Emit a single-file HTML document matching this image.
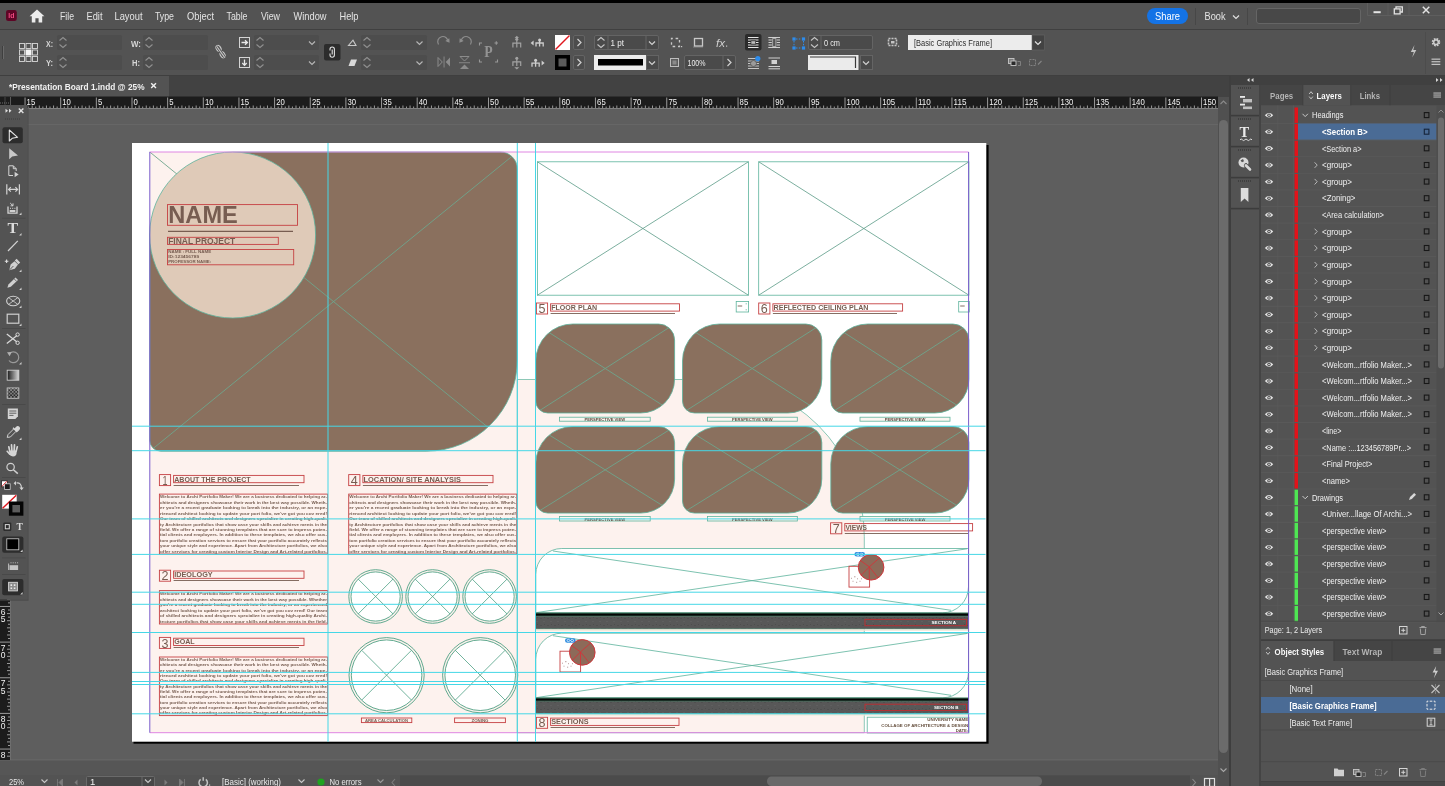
<!DOCTYPE html>
<html lang="en">
<head>
<meta charset="utf-8">
<title>Presentation Board 1.indd @ 25% - Adobe InDesign</title>
<style>
*{margin:0;padding:0}
html,body{width:1445px;height:786px;overflow:hidden;background:#535353}
svg#app{display:block;position:absolute;left:0;top:0;will-change:transform}
svg#app text{font-family:"Liberation Sans",sans-serif;white-space:pre}
svg#app .serif{font-family:"Liberation Serif",serif}
</style>
</head>
<body>
<svg id="app" width="1445" height="786" viewBox="0 0 1445 786">
<!-- sec_top -->
<rect x="0" y="0" width="1445" height="786" fill="#535353" />
<rect x="0" y="0" width="1445" height="3" fill="#000" />
<rect x="0" y="29" width="1445" height="1" fill="#404040" />
<rect x="6" y="10" width="10.8" height="11" fill="#5e0626" rx="2.2"/>
<text x="8.3" y="17.9" font-size="6.6" fill="#ee4a80" textLength="6.2" lengthAdjust="spacingAndGlyphs" font-weight="bold" >Id</text>
<path d="M37 9.5 L29.6 16.2 H31.8 V22.5 H35.4 V18.3 H38.6 V22.5 H42.2 V16.2 H44.4 Z" fill="#ececec" />
<text x="60" y="20" font-size="11" fill="#e4e4e4" textLength="14" lengthAdjust="spacingAndGlyphs" >File</text>
<text x="86.5" y="20" font-size="11" fill="#e4e4e4" textLength="16" lengthAdjust="spacingAndGlyphs" >Edit</text>
<text x="114.5" y="20" font-size="11" fill="#e4e4e4" textLength="28" lengthAdjust="spacingAndGlyphs" >Layout</text>
<text x="155" y="20" font-size="11" fill="#e4e4e4" textLength="19" lengthAdjust="spacingAndGlyphs" >Type</text>
<text x="187" y="20" font-size="11" fill="#e4e4e4" textLength="27" lengthAdjust="spacingAndGlyphs" >Object</text>
<text x="226.5" y="20" font-size="11" fill="#e4e4e4" textLength="21" lengthAdjust="spacingAndGlyphs" >Table</text>
<text x="261" y="20" font-size="11" fill="#e4e4e4" textLength="19" lengthAdjust="spacingAndGlyphs" >View</text>
<text x="293.5" y="20" font-size="11" fill="#e4e4e4" textLength="33" lengthAdjust="spacingAndGlyphs" >Window</text>
<text x="339.5" y="20" font-size="11" fill="#e4e4e4" textLength="19" lengthAdjust="spacingAndGlyphs" >Help</text>
<rect x="1147" y="8" width="41" height="16" fill="#1473e6" rx="8"/>
<text x="1155" y="20" font-size="10.5" fill="#fff" textLength="25" lengthAdjust="spacingAndGlyphs" >Share</text>
<rect x="1195" y="8" width="1" height="17" fill="#474747" />
<text x="1204.5" y="20" font-size="10.5" fill="#e4e4e4" textLength="21" lengthAdjust="spacingAndGlyphs" >Book</text>
<path d="M1233.0 15.5 L1236 18.5 L1239.0 15.5" fill="none" stroke="#e0e0e0" stroke-width="1.2" />
<rect x="1247" y="8" width="1" height="17" fill="#474747" />
<rect x="1256.5" y="8.5" width="104" height="15" fill="#484848" rx="2.5" stroke="#656565"/>
<path d="M1367.5 3 V15.5 H1445" fill="none" stroke="#5e5e5e" stroke-width="1" />
<rect x="1387.5" y="3" width="1" height="12" fill="#5c5c5c" />
<rect x="1408.5" y="3" width="1" height="12" fill="#5c5c5c" />
<rect x="1373.5" y="11.2" width="7.2" height="2" fill="#e4e4e4" />
<path d="M1396 8.8 V6.9 H1402.3 V12 H1400.4" fill="none" stroke="#e4e4e4" stroke-width="1.3" />
<rect x="1394.3" y="8.9" width="5.8" height="5" fill="none" stroke="#e4e4e4" stroke-width="1.3"/>
<path d="M1422.8 6.8 L1429.3 13.2 M1429.3 6.8 L1422.8 13.2" fill="none" stroke="#e4e4e4" stroke-width="1.5" />
<rect x="0" y="75" width="1445" height="1" fill="#3f3f3f" />
<rect x="2" y="46" width="1" height="13" fill="#3f3f3f" />
<rect x="3" y="46" width="1" height="13" fill="#6a6a6a" />
<rect x="19.5" y="43.5" width="5" height="5" fill="none" stroke="#d8d8d8" stroke-width="0.9"/>
<rect x="26.0" y="43.5" width="5" height="5" fill="none" stroke="#d8d8d8" stroke-width="0.9"/>
<rect x="32.5" y="43.5" width="5" height="5" fill="none" stroke="#d8d8d8" stroke-width="0.9"/>
<rect x="19.5" y="50.0" width="5" height="5" fill="none" stroke="#d8d8d8" stroke-width="0.9"/>
<rect x="25.5" y="49.5" width="6" height="6" fill="#f4f4f4" />
<rect x="32.5" y="50.0" width="5" height="5" fill="none" stroke="#d8d8d8" stroke-width="0.9"/>
<rect x="19.5" y="56.5" width="5" height="5" fill="none" stroke="#d8d8d8" stroke-width="0.9"/>
<rect x="26.0" y="56.5" width="5" height="5" fill="none" stroke="#d8d8d8" stroke-width="0.9"/>
<rect x="32.5" y="56.5" width="5" height="5" fill="none" stroke="#d8d8d8" stroke-width="0.9"/>
<text x="46" y="46.5" font-size="9" fill="#d6d6d6" textLength="7" lengthAdjust="spacingAndGlyphs" font-weight="bold" >X:</text>
<text x="46" y="66" font-size="9" fill="#d6d6d6" textLength="7" lengthAdjust="spacingAndGlyphs" font-weight="bold" >Y:</text>
<text x="131" y="46.5" font-size="9" fill="#d6d6d6" textLength="10" lengthAdjust="spacingAndGlyphs" font-weight="bold" >W:</text>
<text x="132" y="66" font-size="9" fill="#d6d6d6" textLength="8" lengthAdjust="spacingAndGlyphs" font-weight="bold" >H:</text>
<rect x="57" y="35" width="65" height="15" fill="#4d4d4d" rx="1.5"/>
<path d="M59.5 40.5 L63 37.5 L66.5 40.5 M59.5 44.5 L63 47.5 L66.5 44.5" fill="none" stroke="#909090" stroke-width="1.1" />
<rect x="57" y="55" width="65" height="15" fill="#4d4d4d" rx="1.5"/>
<path d="M59.5 60.5 L63 57.5 L66.5 60.5 M59.5 64.5 L63 67.5 L66.5 64.5" fill="none" stroke="#909090" stroke-width="1.1" />
<rect x="143" y="35" width="65" height="15" fill="#4d4d4d" rx="1.5"/>
<path d="M145.5 40.5 L149 37.5 L152.5 40.5 M145.5 44.5 L149 47.5 L152.5 44.5" fill="none" stroke="#909090" stroke-width="1.1" />
<rect x="143" y="55" width="65" height="15" fill="#4d4d4d" rx="1.5"/>
<path d="M145.5 60.5 L149 57.5 L152.5 60.5 M145.5 64.5 L149 67.5 L152.5 64.5" fill="none" stroke="#909090" stroke-width="1.1" />
<g transform="translate(220.6,51.6) rotate(-32)"><rect x="-2.1" y="-6.9" width="4.2" height="6.2" rx="2.1" fill="none" stroke="#c8c8c8" stroke-width="1.2"/><rect x="-2.1" y="0.7" width="4.2" height="6.2" rx="2.1" fill="none" stroke="#c8c8c8" stroke-width="1.2"/></g>
<line x1="216.6" y1="46.2" x2="224.8" y2="57.6" stroke="#535353" stroke-width="2.6" />
<line x1="216.6" y1="46.2" x2="224.8" y2="57.6" stroke="#c8c8c8" stroke-width="1.1" />
<rect x="239.5" y="37.5" width="10" height="10" fill="none" stroke="#d4d4d4"/>
<path d="M241.5 42.5 H247 M245 40.3 L247.4 42.5 L245 44.7" fill="none" stroke="#e8e8e8" stroke-width="1.3" />
<rect x="239.5" y="57.5" width="10" height="10" fill="none" stroke="#d4d4d4"/>
<path d="M244.5 59.5 V65 M242.3 63 L244.5 65.4 L246.7 63" fill="none" stroke="#e8e8e8" stroke-width="1.3" />
<rect x="254" y="35" width="65" height="15" fill="#4d4d4d" rx="1.5"/>
<path d="M256.5 40.5 L260 37.5 L263.5 40.5 M256.5 44.5 L260 47.5 L263.5 44.5" fill="none" stroke="#909090" stroke-width="1.1" />
<path d="M309.0 41.5 L312 44.5 L315.0 41.5" fill="none" stroke="#b4b4b4" stroke-width="1.2" />
<rect x="361" y="35" width="66" height="15" fill="#4d4d4d" rx="1.5"/>
<path d="M363.5 40.5 L367 37.5 L370.5 40.5 M363.5 44.5 L367 47.5 L370.5 44.5" fill="none" stroke="#909090" stroke-width="1.1" />
<path d="M416.5 41.5 L419.5 44.5 L422.5 41.5" fill="none" stroke="#b4b4b4" stroke-width="1.2" />
<rect x="254" y="55" width="65" height="15" fill="#4d4d4d" rx="1.5"/>
<path d="M256.5 60.5 L260 57.5 L263.5 60.5 M256.5 64.5 L260 67.5 L263.5 64.5" fill="none" stroke="#909090" stroke-width="1.1" />
<path d="M309.0 61.5 L312 64.5 L315.0 61.5" fill="none" stroke="#b4b4b4" stroke-width="1.2" />
<rect x="361" y="55" width="66" height="15" fill="#4d4d4d" rx="1.5"/>
<path d="M363.5 60.5 L367 57.5 L370.5 60.5 M363.5 64.5 L367 67.5 L370.5 64.5" fill="none" stroke="#909090" stroke-width="1.1" />
<path d="M416.5 61.5 L419.5 64.5 L422.5 61.5" fill="none" stroke="#b4b4b4" stroke-width="1.2" />
<rect x="324" y="44" width="16.5" height="16.5" fill="#2c2c2c" rx="2"/>
<path d="M330 50.5 v-1.3 a2.2 2.2 0 0 1 4.4 0 v5.8 a2.2 2.2 0 0 1 -4.4 0 v-1.6 M332.2 49.5 v5" fill="none" stroke="#e0e0e0" stroke-width="1.1" />
<path d="M348.5 45.5 L356 45.5 L353 40.2 Z" fill="none" stroke="#c8c8c8" stroke-width="1.1" />
<path d="M348.5 66 L351 59.5 H357 L354.5 66 Z" fill="#d8d8d8" />
<path d="M438.5 44.5 a5.2 5.2 0 1 1 9.6 -2.6" fill="none" stroke="#8c8c8c" stroke-width="1.2" />
<path d="M445.3 41 L449.6 42.8 L449.3 38.3 Z" fill="#8c8c8c" />
<path d="M470.5 44.5 a5.2 5.2 0 1 0 -9.6 -2.6" fill="none" stroke="#8c8c8c" stroke-width="1.2" />
<path d="M463.7 41 L459.4 42.8 L459.7 38.3 Z" fill="#8c8c8c" />
<path d="M438 57.5 V66.5 L442.3 62 Z" fill="none" stroke="#8c8c8c" stroke-width="1" />
<path d="M450 57.5 V66.5 L445.7 62 Z" fill="#8c8c8c" />
<rect x="443.6" y="56.5" width="0.9" height="11" fill="#8c8c8c" />
<path d="M460 56.5 H469 L464.5 61 Z" fill="none" stroke="#8c8c8c" stroke-width="1" />
<path d="M460 69 H469 L464.5 64.5 Z" fill="#8c8c8c" />
<rect x="459" y="62.3" width="11" height="0.9" fill="#8c8c8c" />
<text x="484.2" y="57.3" font-size="16.8" fill="#939393" textLength="8.4" lengthAdjust="spacingAndGlyphs" font-weight="bold" class="serif">P</text>
<path d="M479.5 45.5 V43 H482 M494.5 43 H498 M496.3 41.3 V44.7 M479.5 59.5 V62 H482 M497.5 59.5 V62 H495" fill="none" stroke="#989898" stroke-width="1.1" />
<path d="M516.8 38.6 V47.6 M512.9 47.6 V43.1 H520.6999999999999 V47.6" fill="none" stroke="#a2a2a2" stroke-width="1.2" /><circle cx="516.8" cy="39.2" r="1.5" fill="#a2a2a2"/>
<path d="M514.6 38 L516.8 35.8 L519 38 Z" fill="#a2a2a2" />
<path d="M516.8 57.6 V66.0 M512.9 66.0 V61.800000000000004 H520.6999999999999 V66.0" fill="none" stroke="#a2a2a2" stroke-width="1.2" /><circle cx="516.8" cy="58.2" r="1.5" fill="#a2a2a2"/>
<path d="M514.3 67.2 L516.8 69.6 L519.3 67.2 Z" fill="#a2a2a2" />
<path d="M539.6 39.4 V46.6 M536.0 46.6 V43.0 H543.1999999999999 V46.6" fill="none" stroke="#cdcdcd" stroke-width="1.3" /><circle cx="539.6" cy="40.0" r="1.5" fill="#cdcdcd"/>
<path d="M533.6 40.4 L530.6 43 L533.6 45.6 Z" fill="#cdcdcd" />
<path d="M535.6 59.6 V66.8 M532.0 66.8 V63.2 H539.1999999999999 V66.8" fill="none" stroke="#cdcdcd" stroke-width="1.3" /><circle cx="535.6" cy="60.2" r="1.5" fill="#cdcdcd"/>
<path d="M541.6 60.4 L544.6 63 L541.6 65.6 Z" fill="#cdcdcd" />
<rect x="555" y="35" width="15" height="15" fill="#fff" />
<line x1="555.5" y1="49.5" x2="569.5" y2="35.5" stroke="#e0171e" stroke-width="1.4" />
<rect x="573.5" y="35.5" width="11" height="14" fill="#4c4c4c" stroke="#646464" rx="1.5"/>
<path d="M577.5 39.0 L581 42.5 L577.5 46.0" fill="none" stroke="#d0d0d0" stroke-width="1.2" />
<rect x="555" y="55" width="15" height="15" fill="#000" />
<rect x="558.5" y="58.5" width="8" height="8" fill="#5a5a5a" />
<rect x="573.5" y="55.5" width="11" height="14" fill="#4c4c4c" stroke="#646464" rx="1.5"/>
<path d="M577.5 59.0 L581 62.5 L577.5 66.0" fill="none" stroke="#d0d0d0" stroke-width="1.2" />
<rect x="594.5" y="35.5" width="64" height="14" fill="#4a4a4a" stroke="#646464" rx="1.5"/>
<path d="M597.5 40.5 L601 37.5 L604.5 40.5 M597.5 44.5 L601 47.5 L604.5 44.5" fill="none" stroke="#c4c4c4" stroke-width="1.1" />
<rect x="607.5" y="36" width="1" height="13" fill="#646464" />
<rect x="645.5" y="36" width="1" height="13" fill="#646464" />
<text x="610.5" y="46" font-size="9.5" fill="#ececec" textLength="13.5" lengthAdjust="spacingAndGlyphs" >1 pt</text>
<path d="M649.0 41.5 L652 44.5 L655.0 41.5" fill="none" stroke="#d0d0d0" stroke-width="1.2" />
<rect x="594" y="55" width="52" height="15" fill="#ededed" />
<rect x="598" y="59" width="45" height="6.5" fill="#000" />
<rect x="646.5" y="55.5" width="12" height="14" fill="#4a4a4a" stroke="#646464"/>
<path d="M649.0 61.5 L652 64.5 L655.0 61.5" fill="none" stroke="#d0d0d0" stroke-width="1.2" />
<rect x="671.5" y="38.5" width="8" height="8" fill="none" stroke="#c8c8c8" stroke-width="1.3" stroke-dasharray="2.6 2.8" stroke-dashoffset="1.3"/>
<rect x="681" y="46" width="1.2" height="1.2" fill="#c8c8c8" />
<rect x="693" y="46.3" width="10" height="1.6" fill="#6e6e6e" />
<rect x="694.5" y="38.5" width="8" height="7.5" fill="none" stroke="#c8c8c8" stroke-width="1.3"/>
<text x="716" y="46.5" font-size="10.5" fill="#cfcfcf" textLength="9" lengthAdjust="spacingAndGlyphs" font-style="italic">fx</text>
<rect x="726" y="45.5" width="1.2" height="1.2" fill="#c8c8c8" />
<rect x="670.5" y="58.5" width="8" height="8" fill="#5e5e5e" stroke="#bdbdbd"/>
<rect x="672.5" y="60.5" width="4" height="4" fill="#8a8a8a" />
<rect x="684.5" y="55.5" width="51" height="14" fill="#4a4a4a" stroke="#646464" rx="1.5"/>
<rect x="722.5" y="56" width="1" height="13" fill="#646464" />
<text x="687.5" y="65.6" font-size="9.5" fill="#ececec" textLength="18" lengthAdjust="spacingAndGlyphs" >100%</text>
<path d="M727.5 59.0 L731 62.5 L727.5 66.0" fill="none" stroke="#d0d0d0" stroke-width="1.2" />
<rect x="745" y="34" width="16.5" height="16.5" fill="#2b2b2b" rx="2"/>
<rect x="748" y="37.0" width="10.5" height="1" fill="#e4e4e4" />
<rect x="748" y="39.5" width="10.5" height="1" fill="#e4e4e4" />
<rect x="748" y="42.0" width="10.5" height="1" fill="#e4e4e4" />
<rect x="748" y="44.5" width="10.5" height="1" fill="#e4e4e4" />
<rect x="748" y="47.0" width="10.5" height="1" fill="#e4e4e4" />
<rect x="750.5" y="40.5" width="5.5" height="4" fill="#2b2b2b" />
<rect x="751.3" y="41.2" width="4" height="2.6" fill="#bdbdbd" />
<rect x="768.5" y="37" width="3.3" height="1" fill="#d0d0d0" />
<rect x="776.7" y="37" width="3.3" height="1" fill="#d0d0d0" />
<rect x="768.5" y="39.5" width="3.3" height="1" fill="#d0d0d0" />
<rect x="776.7" y="39.5" width="3.3" height="1" fill="#d0d0d0" />
<rect x="768.5" y="42" width="3.3" height="1" fill="#d0d0d0" />
<rect x="776.7" y="42" width="3.3" height="1" fill="#d0d0d0" />
<rect x="768.5" y="44.5" width="3.3" height="1" fill="#d0d0d0" />
<rect x="776.7" y="44.5" width="3.3" height="1" fill="#d0d0d0" />
<rect x="768.5" y="47" width="3.3" height="1" fill="#d0d0d0" />
<rect x="776.7" y="47" width="3.3" height="1" fill="#d0d0d0" />
<rect x="768.5" y="37" width="11.5" height="1" fill="#d0d0d0" />
<rect x="768.5" y="47" width="11.5" height="1" fill="#d0d0d0" />
<rect x="772.7" y="38.6" width="3.2" height="7.8" fill="none" stroke="#bdbdbd" stroke-width="0.8"/>
<rect x="748" y="58" width="11" height="1" fill="#c4c4c4" />
<rect x="748" y="60.5" width="11" height="1" fill="#c4c4c4" />
<rect x="748" y="63" width="11" height="1" fill="#c4c4c4" />
<rect x="748" y="65.5" width="11" height="1" fill="#c4c4c4" />
<rect x="748" y="68" width="11" height="1" fill="#c4c4c4" />
<circle cx="753.5" cy="63.5" r="3" fill="#9a9a9a" stroke="#535353" stroke-width="0.8"/>
<circle cx="757.8" cy="58.6" r="2.6" fill="#2d8ceb"/>
<rect x="768.5" y="57.5" width="11.5" height="1" fill="#d0d0d0" />
<rect x="768.5" y="66" width="11.5" height="1" fill="#d0d0d0" />
<rect x="768.5" y="68.3" width="11.5" height="1" fill="#d0d0d0" />
<rect x="771.5" y="60" width="5.5" height="4" fill="#d0d0d0" />
<rect x="792.4" y="37.4" width="3.2" height="3.2" fill="#2d8ceb" />
<rect x="801.9" y="37.4" width="3.2" height="3.2" fill="#2d8ceb" />
<rect x="792.4" y="46.4" width="3.2" height="3.2" fill="#2d8ceb" />
<rect x="801.9" y="46.4" width="3.2" height="3.2" fill="#2d8ceb" />
<path d="M796 39 H801.5 M796 48 H801.5 M794 41 V46 M803.5 41 V46" fill="none" stroke="#2d8ceb" stroke-width="1" stroke-dasharray="1.5 1.3"/>
<rect x="808.5" y="35.5" width="64" height="14" fill="#4a4a4a" stroke="#646464" rx="1.5"/>
<path d="M811.0 40.5 L814.5 37.5 L818.0 40.5 M811.0 44.5 L814.5 47.5 L818.0 44.5" fill="none" stroke="#c4c4c4" stroke-width="1.1" />
<rect x="820.5" y="36" width="1" height="13" fill="#646464" />
<text x="824" y="45.8" font-size="9.5" fill="#ececec" textLength="16" lengthAdjust="spacingAndGlyphs" >0 cm</text>
<rect x="808" y="55" width="50.5" height="15" fill="#ebebeb" />
<path d="M810 57 H855.5 V68" fill="none" stroke="#3a3a3a" stroke-width="1.2" />
<rect x="860.5" y="55.5" width="12" height="14" fill="#4a4a4a" stroke="#646464"/>
<path d="M863.0 61.5 L866 64.5 L869.0 61.5" fill="none" stroke="#d0d0d0" stroke-width="1.2" />
<rect x="888.5" y="38.5" width="8" height="7" fill="none" stroke="#c4c4c4" stroke-width="1.6" stroke-dasharray="2 1"/>
<rect x="891" y="41" width="3.5" height="2.5" fill="#c4c4c4" />
<rect x="898" y="45.6" width="1.2" height="1.2" fill="#c8c8c8" />
<rect x="908" y="35" width="124" height="15" fill="#ececec" />
<text x="914" y="46" font-size="9.5" fill="#2c2c2c" textLength="78" lengthAdjust="spacingAndGlyphs" >[Basic Graphics Frame]</text>
<rect x="1032" y="35" width="12.5" height="15" fill="#434343" stroke="#646464" stroke-width="0.6"/>
<path d="M1035.0 41.5 L1038 44.5 L1041.0 41.5" fill="none" stroke="#e0e0e0" stroke-width="1.2" />
<rect x="1008.5" y="58.5" width="5.5" height="5" fill="#7a7a7a" stroke="#c8c8c8" stroke-width="0.9"/>
<rect x="1011" y="61" width="5" height="4.5" fill="#2a2a2a" stroke="#c8c8c8" stroke-width="0.9"/>
<path d="M1017.5 61.5 h3 v4 h-2.5" fill="none" stroke="#868686" stroke-width="0.9" />
<rect x="1029.5" y="59.5" width="6" height="6" fill="none" stroke="#868686" stroke-width="0.9" stroke-dasharray="2 1"/>
<line x1="1038" y1="64.5" x2="1041.5" y2="61" stroke="#868686" stroke-width="1.1" />
<path d="M1414.5 45 L1410.8 52 H1413.8 L1412.2 57.5 L1416.3 50 H1413.3 Z" fill="#c4c4c4" />
<rect x="1425" y="32" width="1" height="42" fill="#4c4c4c" />
<circle cx="1436" cy="42.2" r="3.1" fill="none" stroke="#cfcfcf" stroke-width="2.3" stroke-dasharray="1.55 0.9"/><circle cx="1436" cy="42.2" r="2.3" fill="none" stroke="#cfcfcf" stroke-width="1.4"/>
<rect x="1431.5" y="58.6" width="8.8" height="1.1" fill="#cfcfcf" />
<rect x="1431.5" y="61.2" width="8.8" height="1.1" fill="#cfcfcf" />
<rect x="1431.5" y="63.8" width="8.8" height="1.1" fill="#cfcfcf" />
<rect x="0" y="76" width="1445" height="21" fill="#424242" />
<rect x="0" y="76" width="169" height="21" fill="#535353" />
<text x="9" y="90" font-size="9.5" fill="#f2f2f2" textLength="135.5" lengthAdjust="spacingAndGlyphs" font-weight="bold" >*Presentation Board 1.indd @ 25%</text>
<path d="M151.2 83.2 L156 88 M156 83.2 L151.2 88" fill="none" stroke="#f0f0f0" stroke-width="1.4" />
<!-- sec_canvas -->
<rect x="0" y="108" width="1218" height="668" fill="#5e5e5e" />
<rect x="10" y="124" width="1208" height="1" fill="#666666" />
<rect x="0" y="759.5" width="1218" height="1" fill="#6a6a6a" />
<rect x="0" y="96.5" width="1218" height="12.5" fill="#1c1c1c" />
<rect x="10" y="108" width="1208" height="1" fill="#808080" />
<path d="M0 103 H10 M5 97.5 V108" fill="none" stroke="#6e6e6e" stroke-width="1" stroke-dasharray="1 1"/>
<rect x="10" y="97" width="1" height="12" fill="#5a5a5a" />
<path d="M14.36 106.5V108M17.92 105.5V108M21.48 106.5V108M25.05 97.5V108M28.61 106.5V108M32.18 105.5V108M35.75 106.5V108M39.31 105.5V108M42.88 106.5V108M46.44 105.5V108M50.00 106.5V108M53.57 105.5V108M57.14 106.5V108M60.70 97.5V108M64.27 106.5V108M67.83 105.5V108M71.40 106.5V108M74.96 105.5V108M78.53 106.5V108M82.09 105.5V108M85.66 106.5V108M89.22 105.5V108M92.78 106.5V108M96.35 97.5V108M99.91 106.5V108M103.48 105.5V108M107.05 106.5V108M110.61 105.5V108M114.17 106.5V108M117.74 105.5V108M121.31 106.5V108M124.87 105.5V108M128.44 106.5V108M132.00 97.5V108M135.56 106.5V108M139.13 105.5V108M142.69 106.5V108M146.26 105.5V108M149.82 106.5V108M153.39 105.5V108M156.95 106.5V108M160.52 105.5V108M164.09 106.5V108M167.65 97.5V108M171.22 106.5V108M174.78 105.5V108M178.34 106.5V108M181.91 105.5V108M185.47 106.5V108M189.04 105.5V108M192.60 106.5V108M196.17 105.5V108M199.74 106.5V108M203.30 97.5V108M206.87 106.5V108M210.43 105.5V108M214.00 106.5V108M217.56 105.5V108M221.12 106.5V108M224.69 105.5V108M228.25 106.5V108M231.82 105.5V108M235.38 106.5V108M238.95 97.5V108M242.51 106.5V108M246.08 105.5V108M249.64 106.5V108M253.21 105.5V108M256.77 106.5V108M260.34 105.5V108M263.90 106.5V108M267.47 105.5V108M271.03 106.5V108M274.60 97.5V108M278.16 106.5V108M281.73 105.5V108M285.29 106.5V108M288.86 105.5V108M292.43 106.5V108M295.99 105.5V108M299.56 106.5V108M303.12 105.5V108M306.69 106.5V108M310.25 97.5V108M313.81 106.5V108M317.38 105.5V108M320.94 106.5V108M324.51 105.5V108M328.07 106.5V108M331.64 105.5V108M335.20 106.5V108M338.77 105.5V108M342.34 106.5V108M345.90 97.5V108M349.47 106.5V108M353.03 105.5V108M356.60 106.5V108M360.16 105.5V108M363.73 106.5V108M367.29 105.5V108M370.86 106.5V108M374.42 105.5V108M377.99 106.5V108M381.55 97.5V108M385.12 106.5V108M388.68 105.5V108M392.25 106.5V108M395.81 105.5V108M399.38 106.5V108M402.94 105.5V108M406.50 106.5V108M410.07 105.5V108M413.63 106.5V108M417.20 97.5V108M420.76 106.5V108M424.33 105.5V108M427.89 106.5V108M431.46 105.5V108M435.02 106.5V108M438.59 105.5V108M442.15 106.5V108M445.72 105.5V108M449.28 106.5V108M452.85 97.5V108M456.42 106.5V108M459.98 105.5V108M463.55 106.5V108M467.11 105.5V108M470.68 106.5V108M474.24 105.5V108M477.81 106.5V108M481.37 105.5V108M484.94 106.5V108M488.50 97.5V108M492.06 106.5V108M495.63 105.5V108M499.19 106.5V108M502.76 105.5V108M506.32 106.5V108M509.89 105.5V108M513.45 106.5V108M517.02 105.5V108M520.59 106.5V108M524.15 97.5V108M527.71 106.5V108M531.28 105.5V108M534.85 106.5V108M538.41 105.5V108M541.97 106.5V108M545.54 105.5V108M549.11 106.5V108M552.67 105.5V108M556.24 106.5V108M559.80 97.5V108M563.37 106.5V108M566.93 105.5V108M570.50 106.5V108M574.06 105.5V108M577.62 106.5V108M581.19 105.5V108M584.75 106.5V108M588.32 105.5V108M591.88 106.5V108M595.45 97.5V108M599.01 106.5V108M602.58 105.5V108M606.14 106.5V108M609.71 105.5V108M613.27 106.5V108M616.84 105.5V108M620.40 106.5V108M623.97 105.5V108M627.53 106.5V108M631.10 97.5V108M634.66 106.5V108M638.23 105.5V108M641.80 106.5V108M645.36 105.5V108M648.92 106.5V108M652.49 105.5V108M656.05 106.5V108M659.62 105.5V108M663.18 106.5V108M666.75 97.5V108M670.31 106.5V108M673.88 105.5V108M677.44 106.5V108M681.01 105.5V108M684.58 106.5V108M688.14 105.5V108M691.71 106.5V108M695.27 105.5V108M698.84 106.5V108M702.40 97.5V108M705.97 106.5V108M709.53 105.5V108M713.10 106.5V108M716.66 105.5V108M720.23 106.5V108M723.79 105.5V108M727.36 106.5V108M730.92 105.5V108M734.49 106.5V108M738.05 97.5V108M741.62 106.5V108M745.18 105.5V108M748.75 106.5V108M752.31 105.5V108M755.88 106.5V108M759.44 105.5V108M763.00 106.5V108M766.57 105.5V108M770.13 106.5V108M773.70 97.5V108M777.26 106.5V108M780.83 105.5V108M784.39 106.5V108M787.96 105.5V108M791.52 106.5V108M795.09 105.5V108M798.65 106.5V108M802.22 105.5V108M805.78 106.5V108M809.35 97.5V108M812.91 106.5V108M816.48 105.5V108M820.04 106.5V108M823.61 105.5V108M827.17 106.5V108M830.74 105.5V108M834.30 106.5V108M837.87 105.5V108M841.43 106.5V108M845.00 97.5V108M848.56 106.5V108M852.13 105.5V108M855.69 106.5V108M859.26 105.5V108M862.83 106.5V108M866.39 105.5V108M869.96 106.5V108M873.52 105.5V108M877.09 106.5V108M880.65 97.5V108M884.22 106.5V108M887.78 105.5V108M891.35 106.5V108M894.91 105.5V108M898.48 106.5V108M902.04 105.5V108M905.61 106.5V108M909.17 105.5V108M912.74 106.5V108M916.30 97.5V108M919.87 106.5V108M923.43 105.5V108M927.00 106.5V108M930.56 105.5V108M934.12 106.5V108M937.69 105.5V108M941.25 106.5V108M944.82 105.5V108M948.38 106.5V108M951.95 97.5V108M955.51 106.5V108M959.08 105.5V108M962.64 106.5V108M966.21 105.5V108M969.77 106.5V108M973.34 105.5V108M976.90 106.5V108M980.47 105.5V108M984.03 106.5V108M987.60 97.5V108M991.16 106.5V108M994.73 105.5V108M998.29 106.5V108M1001.86 105.5V108M1005.42 106.5V108M1008.99 105.5V108M1012.55 106.5V108M1016.12 105.5V108M1019.68 106.5V108M1023.25 97.5V108M1026.82 106.5V108M1030.38 105.5V108M1033.94 106.5V108M1037.51 105.5V108M1041.07 106.5V108M1044.64 105.5V108M1048.20 106.5V108M1051.77 105.5V108M1055.34 106.5V108M1058.90 97.5V108M1062.47 106.5V108M1066.03 105.5V108M1069.60 106.5V108M1073.16 105.5V108M1076.72 106.5V108M1080.29 105.5V108M1083.86 106.5V108M1087.42 105.5V108M1090.99 106.5V108M1094.55 97.5V108M1098.12 106.5V108M1101.68 105.5V108M1105.24 106.5V108M1108.81 105.5V108M1112.38 106.5V108M1115.94 105.5V108M1119.51 106.5V108M1123.07 105.5V108M1126.63 106.5V108M1130.20 97.5V108M1133.76 106.5V108M1137.33 105.5V108M1140.89 106.5V108M1144.46 105.5V108M1148.03 106.5V108M1151.59 105.5V108M1155.15 106.5V108M1158.72 105.5V108M1162.29 106.5V108M1165.85 97.5V108M1169.41 106.5V108M1172.98 105.5V108M1176.55 106.5V108M1180.11 105.5V108M1183.67 106.5V108M1187.24 105.5V108M1190.81 106.5V108M1194.37 105.5V108M1197.93 106.5V108M1201.50 97.5V108M1205.07 106.5V108M1208.63 105.5V108M1212.19 106.5V108M1215.76 105.5V108" fill="none" stroke="#a8a8a8" stroke-width="0.9" />
<text x="26.6" y="105.2" font-size="8.5" fill="#f4f4f4" textLength="8.6" lengthAdjust="spacingAndGlyphs" >15</text>
<text x="62.3" y="105.2" font-size="8.5" fill="#f4f4f4" textLength="8.6" lengthAdjust="spacingAndGlyphs" >10</text>
<text x="97.9" y="105.2" font-size="8.5" fill="#f4f4f4" textLength="4.3" lengthAdjust="spacingAndGlyphs" >5</text>
<text x="133.6" y="105.2" font-size="8.5" fill="#f4f4f4" textLength="4.3" lengthAdjust="spacingAndGlyphs" >0</text>
<text x="169.2" y="105.2" font-size="8.5" fill="#f4f4f4" textLength="4.3" lengthAdjust="spacingAndGlyphs" >5</text>
<text x="204.9" y="105.2" font-size="8.5" fill="#f4f4f4" textLength="8.6" lengthAdjust="spacingAndGlyphs" >10</text>
<text x="240.5" y="105.2" font-size="8.5" fill="#f4f4f4" textLength="8.6" lengthAdjust="spacingAndGlyphs" >15</text>
<text x="276.2" y="105.2" font-size="8.5" fill="#f4f4f4" textLength="8.6" lengthAdjust="spacingAndGlyphs" >20</text>
<text x="311.9" y="105.2" font-size="8.5" fill="#f4f4f4" textLength="8.6" lengthAdjust="spacingAndGlyphs" >25</text>
<text x="347.5" y="105.2" font-size="8.5" fill="#f4f4f4" textLength="8.6" lengthAdjust="spacingAndGlyphs" >30</text>
<text x="383.1" y="105.2" font-size="8.5" fill="#f4f4f4" textLength="8.6" lengthAdjust="spacingAndGlyphs" >35</text>
<text x="418.8" y="105.2" font-size="8.5" fill="#f4f4f4" textLength="8.6" lengthAdjust="spacingAndGlyphs" >40</text>
<text x="454.5" y="105.2" font-size="8.5" fill="#f4f4f4" textLength="8.6" lengthAdjust="spacingAndGlyphs" >45</text>
<text x="490.1" y="105.2" font-size="8.5" fill="#f4f4f4" textLength="8.6" lengthAdjust="spacingAndGlyphs" >50</text>
<text x="525.8" y="105.2" font-size="8.5" fill="#f4f4f4" textLength="8.6" lengthAdjust="spacingAndGlyphs" >55</text>
<text x="561.4" y="105.2" font-size="8.5" fill="#f4f4f4" textLength="8.6" lengthAdjust="spacingAndGlyphs" >60</text>
<text x="597.1" y="105.2" font-size="8.5" fill="#f4f4f4" textLength="8.6" lengthAdjust="spacingAndGlyphs" >65</text>
<text x="632.7" y="105.2" font-size="8.5" fill="#f4f4f4" textLength="8.6" lengthAdjust="spacingAndGlyphs" >70</text>
<text x="668.4" y="105.2" font-size="8.5" fill="#f4f4f4" textLength="8.6" lengthAdjust="spacingAndGlyphs" >75</text>
<text x="704.0" y="105.2" font-size="8.5" fill="#f4f4f4" textLength="8.6" lengthAdjust="spacingAndGlyphs" >80</text>
<text x="739.6" y="105.2" font-size="8.5" fill="#f4f4f4" textLength="8.6" lengthAdjust="spacingAndGlyphs" >85</text>
<text x="775.3" y="105.2" font-size="8.5" fill="#f4f4f4" textLength="8.6" lengthAdjust="spacingAndGlyphs" >90</text>
<text x="811.0" y="105.2" font-size="8.5" fill="#f4f4f4" textLength="8.6" lengthAdjust="spacingAndGlyphs" >95</text>
<text x="846.6" y="105.2" font-size="8.5" fill="#f4f4f4" textLength="12.9" lengthAdjust="spacingAndGlyphs" >100</text>
<text x="882.2" y="105.2" font-size="8.5" fill="#f4f4f4" textLength="12.9" lengthAdjust="spacingAndGlyphs" >105</text>
<text x="917.9" y="105.2" font-size="8.5" fill="#f4f4f4" textLength="12.9" lengthAdjust="spacingAndGlyphs" >110</text>
<text x="953.5" y="105.2" font-size="8.5" fill="#f4f4f4" textLength="12.9" lengthAdjust="spacingAndGlyphs" >115</text>
<text x="989.2" y="105.2" font-size="8.5" fill="#f4f4f4" textLength="12.9" lengthAdjust="spacingAndGlyphs" >120</text>
<text x="1024.8" y="105.2" font-size="8.5" fill="#f4f4f4" textLength="12.9" lengthAdjust="spacingAndGlyphs" >125</text>
<text x="1060.5" y="105.2" font-size="8.5" fill="#f4f4f4" textLength="12.9" lengthAdjust="spacingAndGlyphs" >130</text>
<text x="1096.1" y="105.2" font-size="8.5" fill="#f4f4f4" textLength="12.9" lengthAdjust="spacingAndGlyphs" >135</text>
<text x="1131.8" y="105.2" font-size="8.5" fill="#f4f4f4" textLength="12.9" lengthAdjust="spacingAndGlyphs" >140</text>
<text x="1167.4" y="105.2" font-size="8.5" fill="#f4f4f4" textLength="12.9" lengthAdjust="spacingAndGlyphs" >145</text>
<text x="1203.1" y="105.2" font-size="8.5" fill="#f4f4f4" textLength="12.9" lengthAdjust="spacingAndGlyphs" >150</text>
<rect x="0" y="109" width="10" height="651" fill="#1c1c1c" />
<rect x="10" y="109" width="1" height="651" fill="#6e6e6e" />
<path d="M8 110.91H10M7 114.48H10M8 118.05H10M7 121.61H10M8 125.17H10M7 128.74H10M8 132.31H10M7 135.87H10M8 139.44H10M0 143.00H10M8 146.56H10M7 150.13H10M8 153.69H10M7 157.26H10M8 160.82H10M7 164.39H10M8 167.95H10M7 171.52H10M8 175.09H10M0 178.65H10M8 182.22H10M7 185.78H10M8 189.34H10M7 192.91H10M8 196.47H10M7 200.04H10M8 203.60H10M7 207.17H10M8 210.74H10M0 214.30H10M8 217.87H10M7 221.43H10M8 225.00H10M7 228.56H10M8 232.12H10M7 235.69H10M8 239.25H10M7 242.82H10M8 246.38H10M0 249.95H10M8 253.51H10M7 257.08H10M8 260.64H10M7 264.21H10M8 267.77H10M7 271.34H10M8 274.90H10M7 278.47H10M8 282.03H10M0 285.60H10M8 289.16H10M7 292.73H10M8 296.29H10M7 299.86H10M8 303.43H10M7 306.99H10M8 310.56H10M7 314.12H10M8 317.69H10M0 321.25H10M8 324.81H10M7 328.38H10M8 331.94H10M7 335.51H10M8 339.07H10M7 342.64H10M8 346.20H10M7 349.77H10M8 353.34H10M0 356.90H10M8 360.47H10M7 364.03H10M8 367.60H10M7 371.16H10M8 374.73H10M7 378.29H10M8 381.86H10M7 385.42H10M8 388.99H10M0 392.55H10M8 396.12H10M7 399.68H10M8 403.25H10M7 406.81H10M8 410.38H10M7 413.94H10M8 417.50H10M7 421.07H10M8 424.63H10M0 428.20H10M8 431.76H10M7 435.33H10M8 438.89H10M7 442.46H10M8 446.02H10M7 449.59H10M8 453.15H10M7 456.72H10M8 460.28H10M0 463.85H10M8 467.42H10M7 470.98H10M8 474.55H10M7 478.11H10M8 481.68H10M7 485.24H10M8 488.81H10M7 492.37H10M8 495.94H10M0 499.50H10M8 503.06H10M7 506.63H10M8 510.19H10M7 513.76H10M8 517.33H10M7 520.89H10M8 524.45H10M7 528.02H10M8 531.59H10M0 535.15H10M8 538.71H10M7 542.28H10M8 545.85H10M7 549.41H10M8 552.97H10M7 556.54H10M8 560.11H10M7 563.67H10M8 567.24H10M0 570.80H10M8 574.37H10M7 577.93H10M8 581.50H10M7 585.06H10M8 588.62H10M7 592.19H10M8 595.75H10M7 599.32H10M8 602.88H10M0 606.45H10M8 610.01H10M7 613.58H10M8 617.14H10M7 620.71H10M8 624.27H10M7 627.84H10M8 631.40H10M7 634.97H10M8 638.53H10M0 642.10H10M8 645.66H10M7 649.23H10M8 652.80H10M7 656.36H10M8 659.92H10M7 663.49H10M8 667.05H10M7 670.62H10M8 674.18H10M0 677.75H10M8 681.31H10M7 684.88H10M8 688.44H10M7 692.01H10M8 695.58H10M7 699.14H10M8 702.71H10M7 706.27H10M8 709.84H10M0 713.40H10M8 716.97H10M7 720.53H10M8 724.10H10M7 727.66H10M8 731.23H10M7 734.79H10M8 738.36H10M7 741.92H10M8 745.49H10M0 749.05H10M8 752.62H10M7 756.18H10" fill="none" stroke="#a8a8a8" stroke-width="0.9" />
<text x="0.8" y="151.5" font-size="8.5" fill="#f4f4f4" >0</text>
<text x="0.8" y="187.2" font-size="8.5" fill="#f4f4f4" >5</text>
<text x="0.8" y="222.8" font-size="8.5" fill="#f4f4f4" >1</text>
<text x="0.8" y="230.1" font-size="8.5" fill="#f4f4f4" >0</text>
<text x="0.8" y="258.4" font-size="8.5" fill="#f4f4f4" >1</text>
<text x="0.8" y="265.8" font-size="8.5" fill="#f4f4f4" >5</text>
<text x="0.8" y="294.1" font-size="8.5" fill="#f4f4f4" >2</text>
<text x="0.8" y="301.4" font-size="8.5" fill="#f4f4f4" >0</text>
<text x="0.8" y="329.8" font-size="8.5" fill="#f4f4f4" >2</text>
<text x="0.8" y="337.1" font-size="8.5" fill="#f4f4f4" >5</text>
<text x="0.8" y="365.4" font-size="8.5" fill="#f4f4f4" >3</text>
<text x="0.8" y="372.7" font-size="8.5" fill="#f4f4f4" >0</text>
<text x="0.8" y="401.0" font-size="8.5" fill="#f4f4f4" >3</text>
<text x="0.8" y="408.3" font-size="8.5" fill="#f4f4f4" >5</text>
<text x="0.8" y="436.7" font-size="8.5" fill="#f4f4f4" >4</text>
<text x="0.8" y="444.0" font-size="8.5" fill="#f4f4f4" >0</text>
<text x="0.8" y="472.4" font-size="8.5" fill="#f4f4f4" >4</text>
<text x="0.8" y="479.7" font-size="8.5" fill="#f4f4f4" >5</text>
<text x="0.8" y="508.0" font-size="8.5" fill="#f4f4f4" >5</text>
<text x="0.8" y="515.3" font-size="8.5" fill="#f4f4f4" >0</text>
<text x="0.8" y="543.6" font-size="8.5" fill="#f4f4f4" >5</text>
<text x="0.8" y="550.9" font-size="8.5" fill="#f4f4f4" >5</text>
<text x="0.8" y="579.3" font-size="8.5" fill="#f4f4f4" >6</text>
<text x="0.8" y="586.6" font-size="8.5" fill="#f4f4f4" >0</text>
<text x="0.8" y="615.0" font-size="8.5" fill="#f4f4f4" >6</text>
<text x="0.8" y="622.2" font-size="8.5" fill="#f4f4f4" >5</text>
<text x="0.8" y="650.6" font-size="8.5" fill="#f4f4f4" >7</text>
<text x="0.8" y="657.9" font-size="8.5" fill="#f4f4f4" >0</text>
<text x="0.8" y="686.2" font-size="8.5" fill="#f4f4f4" >7</text>
<text x="0.8" y="693.5" font-size="8.5" fill="#f4f4f4" >5</text>
<text x="0.8" y="721.9" font-size="8.5" fill="#f4f4f4" >8</text>
<text x="0.8" y="729.2" font-size="8.5" fill="#f4f4f4" >0</text>
<text x="0.8" y="757.5" font-size="8.5" fill="#f4f4f4" >8</text>
<rect x="1218" y="97" width="11" height="689" fill="#505050" />
<rect x="1219" y="120" width="9" height="633" fill="#6b6b6b" rx="4.5"/>
<path d="M1220.5 104 L1223.5 101 L1226.5 104" fill="none" stroke="#8a8a8a" stroke-width="1.1" />
<path d="M1220.5 768.5 L1223.5 771.5 L1226.5 768.5" fill="none" stroke="#a8a8a8" stroke-width="1.1" />
<!-- sec_page -->
<defs><pattern id="spk" width="7" height="7" patternUnits="userSpaceOnUse"><rect width="7" height="7" fill="#585858"/><rect x="1" y="2" width="2" height="1" fill="#505050"/><rect x="4" y="5" width="2" height="1" fill="#5f5f5f"/><rect x="5" y="1" width="1" height="1" fill="#4e4e4e"/></pattern></defs>
<rect x="133.5" y="145" width="855.1" height="598.7" fill="#000" />
<rect x="132" y="143" width="854.3" height="598.7" fill="#fff" />
<rect x="149.8" y="152" width="368" height="580.7" fill="#fdf2ee" />
<path d="M517.3 379.5 H707.3 A157 157 0 0 1 864.3 536.5 V732.7 H517.3 Z" fill="#fdf2ee" stroke="#5cb39c" stroke-width="0.7" />
<path d="M240.8 152 H500.29999999999995 A17 17 0 0 1 517.3 169 V360.2 A91 91 0 0 1 426.29999999999995 451.2 H160.8 A11 11 0 0 1 149.8 440.2 V243 A91 91 0 0 1 240.8 152 Z" fill="#8a705e" stroke="#5cb39c" stroke-width="0.8" />
<clipPath id="cbig"><path d="M240.8 152 H500.29999999999995 A17 17 0 0 1 517.3 169 V360.2 A91 91 0 0 1 426.29999999999995 451.2 H160.8 A11 11 0 0 1 149.8 440.2 V243 A91 91 0 0 1 240.8 152 Z"/><rect x="149" y="151" width="60" height="60"/></clipPath>
<path d="M149.8 152L517.3 451.2M149.8 451.2L517.3 152" fill="none" stroke="#6ea58c" stroke-width="0.9" clip-path="url(#cbig)"/>
<circle cx="232.6" cy="235" r="83" fill="#dfcab8" stroke="#5cb39c" stroke-width="0.8"/>
<rect x="167.5" y="204.6" width="130.0" height="20.7" fill="none" stroke="#c54042" stroke-width="0.9"/>
<text x="168.3" y="222.8" font-size="23.2" fill="#775d51" textLength="69.5" lengthAdjust="spacingAndGlyphs" font-weight="bold" >NAME</text>
<line x1="168" y1="231.4" x2="293" y2="231.4" stroke="#775d51" stroke-width="1.4" />
<rect x="167.5" y="237.3" width="110.8" height="7.1" fill="none" stroke="#c54042" stroke-width="0.9"/>
<text x="168.2" y="244.2" font-size="9" fill="#775d51" textLength="67" lengthAdjust="spacingAndGlyphs" font-weight="bold" >FINAL PROJECT</text>
<rect x="167.5" y="249.5" width="126.2" height="15.3" fill="none" stroke="#c54042" stroke-width="0.9"/>
<text x="168.2" y="252.7" font-size="3.9" fill="#775d51" textLength="43" lengthAdjust="spacingAndGlyphs" font-weight="bold" >NAME : FULL NAME</text>
<text x="168.2" y="257.8" font-size="3.9" fill="#775d51" textLength="31" lengthAdjust="spacingAndGlyphs" font-weight="bold" >ID:123456789</text>
<text x="168.2" y="262.9" font-size="3.9" fill="#775d51" textLength="43" lengthAdjust="spacingAndGlyphs" font-weight="bold" >PROFESSOR NAME:</text>
<rect x="159.4" y="474.6" width="11.2" height="11.0" fill="none" stroke="#c54042" stroke-width="0.9"/><text x="162.5" y="484.70000000000005" font-size="13.5" fill="#775d51" textLength="5" lengthAdjust="spacingAndGlyphs" >1</text><rect x="173.6" y="475.40000000000003" width="130.4" height="7.3" fill="none" stroke="#c54042" stroke-width="0.9"/><text x="174.2" y="481.5" font-size="7.9" fill="#775d51" textLength="76.5" lengthAdjust="spacingAndGlyphs" font-weight="bold" >ABOUT THE PROJECT</text><line x1="173.6" y1="485.5" x2="299" y2="485.5" stroke="#775d51" stroke-width="0.9" />
<rect x="159.4" y="494.1" width="168.2" height="59.9" fill="none" stroke="#c54042" stroke-width="0.9"/><text x="160.0" y="498.35" font-size="4.3" fill="#775d51" textLength="167.0" lengthAdjust="spacingAndGlyphs" font-weight="bold" >Welcome to Archi Portfolio Maker! We are a business dedicated to helping ar-</text><text x="160.0" y="503.79" font-size="4.3" fill="#775d51" textLength="167.0" lengthAdjust="spacingAndGlyphs" font-weight="bold" >chitects and designers showcase their work in the best way possible. Wheth-</text><text x="160.0" y="509.24" font-size="4.3" fill="#775d51" textLength="167.0" lengthAdjust="spacingAndGlyphs" font-weight="bold" >er you're a recent graduate looking to break into the industry, or an expe-</text><text x="160.0" y="514.68" font-size="4.3" fill="#775d51" textLength="167.0" lengthAdjust="spacingAndGlyphs" font-weight="bold" >rienced architect looking to update your port folio, we've got you cov ered!</text><text x="160.0" y="520.13" font-size="4.3" fill="#775d51" textLength="167.0" lengthAdjust="spacingAndGlyphs" font-weight="bold" >Our team of skilled architects and designers specialize in creating high-quali-</text><text x="160.0" y="525.57" font-size="4.3" fill="#775d51" textLength="167.0" lengthAdjust="spacingAndGlyphs" font-weight="bold" >ty Architecture portfolios that show case your skills and achieve ments in the</text><text x="160.0" y="531.02" font-size="4.3" fill="#775d51" textLength="167.0" lengthAdjust="spacingAndGlyphs" font-weight="bold" >field. We offer a range of stunning templates that are sure to impress poten-</text><text x="160.0" y="536.47" font-size="4.3" fill="#775d51" textLength="167.0" lengthAdjust="spacingAndGlyphs" font-weight="bold" >tial clients and employers. In addition to these templates, we also offer cus-</text><text x="160.0" y="541.91" font-size="4.3" fill="#775d51" textLength="167.0" lengthAdjust="spacingAndGlyphs" font-weight="bold" >tom portfolio creation services to ensure that your portfolio accurately reflects</text><text x="160.0" y="547.36" font-size="4.3" fill="#775d51" textLength="167.0" lengthAdjust="spacingAndGlyphs" font-weight="bold" >your unique style and experience. Apart from Architecture portfolios, we also</text><text x="160.0" y="552.8" font-size="4.3" fill="#775d51" textLength="167.0" lengthAdjust="spacingAndGlyphs" font-weight="bold" >offer services for creating custom Interior Design and Art-related portfolios.</text>
<rect x="159.4" y="570.2" width="11.2" height="11.0" fill="none" stroke="#c54042" stroke-width="0.9"/><text x="161.5" y="580.3000000000001" font-size="13.5" fill="#775d51" textLength="7" lengthAdjust="spacingAndGlyphs" >2</text><rect x="173.6" y="571.0" width="130.4" height="7.3" fill="none" stroke="#c54042" stroke-width="0.9"/><text x="174.2" y="577.1" font-size="7.9" fill="#775d51" textLength="38.5" lengthAdjust="spacingAndGlyphs" font-weight="bold" >IDEOLOGY</text><line x1="173.6" y1="580.5" x2="299" y2="580.5" stroke="#775d51" stroke-width="0.9" />
<rect x="159.4" y="590.6" width="168.2" height="33.4" fill="none" stroke="#c54042" stroke-width="0.9"/><text x="160.0" y="594.94" font-size="4.3" fill="#775d51" textLength="167.0" lengthAdjust="spacingAndGlyphs" font-weight="bold" >Welcome to Archi Portfolio Maker! We are a business dedicated to helping ar-</text><text x="160.0" y="600.51" font-size="4.3" fill="#775d51" textLength="167.0" lengthAdjust="spacingAndGlyphs" font-weight="bold" >chitects and designers showcase their work in the best way possible. Whether</text><text x="160.0" y="606.08" font-size="4.3" fill="#775d51" textLength="167.0" lengthAdjust="spacingAndGlyphs" font-weight="bold" >you're a recent graduate looking to break into the industry, or an experienced</text><text x="160.0" y="611.64" font-size="4.3" fill="#775d51" textLength="167.0" lengthAdjust="spacingAndGlyphs" font-weight="bold" >architect looking to update your port folio, we've got you cov ered! Our team</text><text x="160.0" y="617.21" font-size="4.3" fill="#775d51" textLength="167.0" lengthAdjust="spacingAndGlyphs" font-weight="bold" >of skilled architects and designers specialize in creating high-quality Archi-</text><text x="160.0" y="622.78" font-size="4.3" fill="#775d51" textLength="167.0" lengthAdjust="spacingAndGlyphs" font-weight="bold" >tecture portfolios that show case your skills and achieve ments in the field.</text>
<rect x="159.4" y="637.4" width="11.2" height="11.0" fill="none" stroke="#c54042" stroke-width="0.9"/><text x="161.5" y="647.5" font-size="13.5" fill="#775d51" textLength="7" lengthAdjust="spacingAndGlyphs" >3</text><rect x="173.6" y="638.1999999999999" width="130.4" height="7.3" fill="none" stroke="#c54042" stroke-width="0.9"/><text x="174.2" y="644.3" font-size="7.9" fill="#775d51" textLength="20.5" lengthAdjust="spacingAndGlyphs" font-weight="bold" >GOAL</text><line x1="173.6" y1="647.5" x2="299" y2="647.5" stroke="#775d51" stroke-width="0.9" />
<rect x="159.4" y="657" width="168.2" height="58.6" fill="none" stroke="#c54042" stroke-width="0.9"/><text x="160.0" y="661.16" font-size="4.3" fill="#775d51" textLength="167.0" lengthAdjust="spacingAndGlyphs" font-weight="bold" >Welcome to Archi Portfolio Maker! We are a business dedicated to helping ar-</text><text x="160.0" y="666.48" font-size="4.3" fill="#775d51" textLength="167.0" lengthAdjust="spacingAndGlyphs" font-weight="bold" >chitects and designers showcase their work in the best way possible. Wheth-</text><text x="160.0" y="671.81" font-size="4.3" fill="#775d51" textLength="167.0" lengthAdjust="spacingAndGlyphs" font-weight="bold" >er you're a recent graduate looking to break into the industry, or an expe-</text><text x="160.0" y="677.14" font-size="4.3" fill="#775d51" textLength="167.0" lengthAdjust="spacingAndGlyphs" font-weight="bold" >rienced architect looking to update your port folio, we've got you cov ered!</text><text x="160.0" y="682.46" font-size="4.3" fill="#775d51" textLength="167.0" lengthAdjust="spacingAndGlyphs" font-weight="bold" >Our team of skilled architects and designers specialize in creating high-quali-</text><text x="160.0" y="687.79" font-size="4.3" fill="#775d51" textLength="167.0" lengthAdjust="spacingAndGlyphs" font-weight="bold" >ty Architecture portfolios that show case your skills and achieve ments in the</text><text x="160.0" y="693.12" font-size="4.3" fill="#775d51" textLength="167.0" lengthAdjust="spacingAndGlyphs" font-weight="bold" >field. We offer a range of stunning templates that are sure to impress poten-</text><text x="160.0" y="698.45" font-size="4.3" fill="#775d51" textLength="167.0" lengthAdjust="spacingAndGlyphs" font-weight="bold" >tial clients and employers. In addition to these templates, we also offer cus-</text><text x="160.0" y="703.77" font-size="4.3" fill="#775d51" textLength="167.0" lengthAdjust="spacingAndGlyphs" font-weight="bold" >tom portfolio creation services to ensure that your portfolio accurately reflects</text><text x="160.0" y="709.1" font-size="4.3" fill="#775d51" textLength="167.0" lengthAdjust="spacingAndGlyphs" font-weight="bold" >your unique style and experience. Apart from Architecture portfolios, we also</text><text x="160.0" y="714.43" font-size="4.3" fill="#775d51" textLength="167.0" lengthAdjust="spacingAndGlyphs" font-weight="bold" >offer services for creating custom Interior Design and Art-related portfolios.</text>
<rect x="348.7" y="474.6" width="11.2" height="11.0" fill="none" stroke="#c54042" stroke-width="0.9"/><text x="350.8" y="484.70000000000005" font-size="13.5" fill="#775d51" textLength="7" lengthAdjust="spacingAndGlyphs" >4</text><rect x="362.9" y="475.40000000000003" width="130.1" height="7.3" fill="none" stroke="#c54042" stroke-width="0.9"/><text x="363.5" y="481.5" font-size="7.9" fill="#775d51" textLength="97.5" lengthAdjust="spacingAndGlyphs" font-weight="bold" >LOCATION/ SITE ANALYSIS</text><line x1="362.9" y1="485.5" x2="488" y2="485.5" stroke="#775d51" stroke-width="0.9" />
<rect x="348.7" y="494.1" width="168.1" height="59.9" fill="none" stroke="#c54042" stroke-width="0.9"/><text x="349.3" y="498.35" font-size="4.3" fill="#775d51" textLength="166.9" lengthAdjust="spacingAndGlyphs" font-weight="bold" >Welcome to Archi Portfolio Maker! We are a business dedicated to helping ar-</text><text x="349.3" y="503.79" font-size="4.3" fill="#775d51" textLength="166.9" lengthAdjust="spacingAndGlyphs" font-weight="bold" >chitects and designers showcase their work in the best way possible. Wheth-</text><text x="349.3" y="509.24" font-size="4.3" fill="#775d51" textLength="166.9" lengthAdjust="spacingAndGlyphs" font-weight="bold" >er you're a recent graduate looking to break into the industry, or an expe-</text><text x="349.3" y="514.68" font-size="4.3" fill="#775d51" textLength="166.9" lengthAdjust="spacingAndGlyphs" font-weight="bold" >rienced architect looking to update your port folio, we've got you cov ered!</text><text x="349.3" y="520.13" font-size="4.3" fill="#775d51" textLength="166.9" lengthAdjust="spacingAndGlyphs" font-weight="bold" >Our team of skilled architects and designers specialize in creating high-quali-</text><text x="349.3" y="525.57" font-size="4.3" fill="#775d51" textLength="166.9" lengthAdjust="spacingAndGlyphs" font-weight="bold" >ty Architecture portfolios that show case your skills and achieve ments in the</text><text x="349.3" y="531.02" font-size="4.3" fill="#775d51" textLength="166.9" lengthAdjust="spacingAndGlyphs" font-weight="bold" >field. We offer a range of stunning templates that are sure to impress poten-</text><text x="349.3" y="536.47" font-size="4.3" fill="#775d51" textLength="166.9" lengthAdjust="spacingAndGlyphs" font-weight="bold" >tial clients and employers. In addition to these templates, we also offer cus-</text><text x="349.3" y="541.91" font-size="4.3" fill="#775d51" textLength="166.9" lengthAdjust="spacingAndGlyphs" font-weight="bold" >tom portfolio creation services to ensure that your portfolio accurately reflects</text><text x="349.3" y="547.36" font-size="4.3" fill="#775d51" textLength="166.9" lengthAdjust="spacingAndGlyphs" font-weight="bold" >your unique style and experience. Apart from Architecture portfolios, we also</text><text x="349.3" y="552.8" font-size="4.3" fill="#775d51" textLength="166.9" lengthAdjust="spacingAndGlyphs" font-weight="bold" >offer services for creating custom Interior Design and Art-related portfolios.</text>
<circle cx="375.6" cy="596.5" r="26.8" fill="none" stroke="#4fa185" stroke-width="0.9"/><circle cx="375.6" cy="596.5" r="24.6" fill="#fff" stroke="#4fa185" stroke-width="0.9"/>
<path d="M358.2 579.1L393.0 613.9M358.2 613.9L393.0 579.1" fill="none" stroke="#4fa185" stroke-width="0.8" />
<circle cx="432.6" cy="596.5" r="26.8" fill="none" stroke="#4fa185" stroke-width="0.9"/><circle cx="432.6" cy="596.5" r="24.6" fill="#fff" stroke="#4fa185" stroke-width="0.9"/>
<path d="M415.2 579.1L450.0 613.9M415.2 613.9L450.0 579.1" fill="none" stroke="#4fa185" stroke-width="0.8" />
<circle cx="489.6" cy="596.5" r="26.8" fill="none" stroke="#4fa185" stroke-width="0.9"/><circle cx="489.6" cy="596.5" r="24.6" fill="#fff" stroke="#4fa185" stroke-width="0.9"/>
<path d="M472.2 579.1L507.0 613.9M472.2 613.9L507.0 579.1" fill="none" stroke="#4fa185" stroke-width="0.8" />
<circle cx="386.6" cy="675.2" r="37.6" fill="none" stroke="#4fa185" stroke-width="0.9"/><circle cx="386.6" cy="675.2" r="35.3" fill="#fff" stroke="#4fa185" stroke-width="0.9"/>
<path d="M361.6 650.2L411.6 700.2M361.6 700.2L411.6 650.2" fill="none" stroke="#4fa185" stroke-width="0.8" />
<circle cx="480.2" cy="675.2" r="37.6" fill="none" stroke="#4fa185" stroke-width="0.9"/><circle cx="480.2" cy="675.2" r="35.3" fill="#fff" stroke="#4fa185" stroke-width="0.9"/>
<path d="M455.2 650.2L505.2 700.2M455.2 700.2L505.2 650.2" fill="none" stroke="#4fa185" stroke-width="0.8" />
<rect x="361.4" y="718" width="50.4" height="4.6" fill="none" stroke="#c54042" stroke-width="0.9"/>
<text x="365" y="721.8" font-size="3.9" fill="#775d51" textLength="43" lengthAdjust="spacingAndGlyphs" font-weight="bold" >AREA CALCULATION</text>
<rect x="454.6" y="718" width="50.8" height="4.6" fill="none" stroke="#c54042" stroke-width="0.9"/>
<text x="471.5" y="721.8" font-size="3.9" fill="#775d51" textLength="17" lengthAdjust="spacingAndGlyphs" font-weight="bold" >ZONING</text>
<rect x="537.4" y="161.8" width="211.0" height="133.4" fill="#fff" stroke="#5cb39c" stroke-width="0.8"/><path d="M537.4 161.8L748.4 295.2M537.4 295.2L748.4 161.8" fill="none" stroke="#5a9a86" stroke-width="0.8" />
<rect x="758.7" y="161.8" width="210.2" height="133.4" fill="#fff" stroke="#5cb39c" stroke-width="0.8"/><path d="M758.7 161.8L968.9 295.2M758.7 295.2L968.9 161.8" fill="none" stroke="#5a9a86" stroke-width="0.8" />
<rect x="536.4" y="303" width="11.2" height="11" fill="none" stroke="#c54042" stroke-width="0.9"/><text x="538.5" y="313.1" font-size="13.5" fill="#775d51" textLength="7" lengthAdjust="spacingAndGlyphs" >5</text><rect x="550.6" y="303.8" width="128.9" height="7.3" fill="none" stroke="#c54042" stroke-width="0.9"/><text x="551.2" y="309.9" font-size="7.9" fill="#775d51" textLength="46" lengthAdjust="spacingAndGlyphs" font-weight="bold" >FLOOR PLAN</text><line x1="550.6" y1="313.5" x2="675" y2="313.5" stroke="#775d51" stroke-width="0.9" />
<rect x="758.7" y="303" width="11.2" height="11" fill="none" stroke="#c54042" stroke-width="0.9"/><text x="760.8000000000001" y="313.1" font-size="13.5" fill="#775d51" textLength="7" lengthAdjust="spacingAndGlyphs" >6</text><rect x="772.9000000000001" y="303.8" width="129.7" height="7.3" fill="none" stroke="#c54042" stroke-width="0.9"/><text x="773.5000000000001" y="309.9" font-size="7.9" fill="#775d51" textLength="95" lengthAdjust="spacingAndGlyphs" font-weight="bold" >REFLECTED CEILING PLAN</text><line x1="772.9000000000001" y1="313.5" x2="897" y2="313.5" stroke="#775d51" stroke-width="0.9" />
<rect x="736.2" y="301.5" width="12.4" height="10.5" fill="none" stroke="#5cb39c" stroke-width="0.8"/>
<line x1="737.7" y1="306" x2="742.2" y2="306" stroke="#775d51" stroke-width="0.9" />
<rect x="745.7" y="303.3" width="1" height="1" fill="#5cb39c" />
<rect x="745.7" y="309.3" width="1" height="1" fill="#5cb39c" />
<rect x="958.7" y="301.5" width="10.6" height="10.5" fill="none" stroke="#5cb39c" stroke-width="0.8"/>
<line x1="960.2" y1="306" x2="964.7" y2="306" stroke="#775d51" stroke-width="0.9" />
<rect x="968.2" y="303.3" width="1" height="1" fill="#5cb39c" />
<rect x="968.2" y="309.3" width="1" height="1" fill="#5cb39c" />
<path d="M572.8 324 H658.6 A16 16 0 0 1 674.6 340 V379 A34 34 0 0 1 640.6 413 H547.8 A12 12 0 0 1 535.8 401 V361 A37 37 0 0 1 572.8 324 Z" fill="#8a705e" stroke="#5cb39c" stroke-width="0.8" />
<clipPath id="c535_324"><path d="M572.8 324 H658.6 A16 16 0 0 1 674.6 340 V379 A34 34 0 0 1 640.6 413 H547.8 A12 12 0 0 1 535.8 401 V361 A37 37 0 0 1 572.8 324 Z"/></clipPath>
<path d="M535.8 324L674.6 413M535.8 413L674.6 324" fill="none" stroke="#6ea58c" stroke-width="0.9" clip-path="url(#c535_324)"/>
<rect x="559.4" y="417.2" width="90.8" height="4.0" fill="#fbf6f1" stroke="#5cb39c" stroke-width="0.8"/>
<text x="584.6" y="420.7" font-size="4" fill="#5f4a3f" textLength="40.5" lengthAdjust="spacingAndGlyphs" font-weight="bold" >PERSPECTIVE VIEW</text>
<path d="M719.5 324 H805.8 A16 16 0 0 1 821.8 340 V379 A34 34 0 0 1 787.8 413 H694.5 A12 12 0 0 1 682.5 401 V361 A37 37 0 0 1 719.5 324 Z" fill="#8a705e" stroke="#5cb39c" stroke-width="0.8" />
<clipPath id="c682_324"><path d="M719.5 324 H805.8 A16 16 0 0 1 821.8 340 V379 A34 34 0 0 1 787.8 413 H694.5 A12 12 0 0 1 682.5 401 V361 A37 37 0 0 1 719.5 324 Z"/></clipPath>
<path d="M682.5 324L821.8 413M682.5 413L821.8 324" fill="none" stroke="#6ea58c" stroke-width="0.9" clip-path="url(#c682_324)"/>
<rect x="707.4" y="417.2" width="89.9" height="4.0" fill="#fbf6f1" stroke="#5cb39c" stroke-width="0.8"/>
<text x="732.1" y="420.7" font-size="4" fill="#5f4a3f" textLength="40.5" lengthAdjust="spacingAndGlyphs" font-weight="bold" >PERSPECTIVE VIEW</text>
<path d="M867.8 324 H952.9 A16 16 0 0 1 968.9 340 V379 A34 34 0 0 1 934.9 413 H842.8 A12 12 0 0 1 830.8 401 V361 A37 37 0 0 1 867.8 324 Z" fill="#8a705e" stroke="#5cb39c" stroke-width="0.8" />
<clipPath id="c830_324"><path d="M867.8 324 H952.9 A16 16 0 0 1 968.9 340 V379 A34 34 0 0 1 934.9 413 H842.8 A12 12 0 0 1 830.8 401 V361 A37 37 0 0 1 867.8 324 Z"/></clipPath>
<path d="M830.8 324L968.9 413M830.8 413L968.9 324" fill="none" stroke="#6ea58c" stroke-width="0.9" clip-path="url(#c830_324)"/>
<rect x="860" y="417.2" width="90" height="4.0" fill="#fbf6f1" stroke="#5cb39c" stroke-width="0.8"/>
<text x="884.8" y="420.7" font-size="4" fill="#5f4a3f" textLength="40.5" lengthAdjust="spacingAndGlyphs" font-weight="bold" >PERSPECTIVE VIEW</text>
<path d="M572.8 426.6 H658.6 A16 16 0 0 1 674.6 442.6 V479.1 A34 34 0 0 1 640.6 513.1 H547.8 A12 12 0 0 1 535.8 501.1 V463.6 A37 37 0 0 1 572.8 426.6 Z" fill="#8a705e" stroke="#5cb39c" stroke-width="0.8" />
<clipPath id="c535_426"><path d="M572.8 426.6 H658.6 A16 16 0 0 1 674.6 442.6 V479.1 A34 34 0 0 1 640.6 513.1 H547.8 A12 12 0 0 1 535.8 501.1 V463.6 A37 37 0 0 1 572.8 426.6 Z"/></clipPath>
<path d="M535.8 426.6L674.6 513.1M535.8 513.1L674.6 426.6" fill="none" stroke="#6ea58c" stroke-width="0.9" clip-path="url(#c535_426)"/>
<rect x="559.4" y="516.4" width="90.8" height="4.6" fill="#fbf6f1" stroke="#5cb39c" stroke-width="0.8"/>
<text x="584.6" y="520.5" font-size="4" fill="#5f4a3f" textLength="40.5" lengthAdjust="spacingAndGlyphs" font-weight="bold" >PERSPECTIVE VIEW</text>
<path d="M719.5 426.6 H805.8 A16 16 0 0 1 821.8 442.6 V479.1 A34 34 0 0 1 787.8 513.1 H694.5 A12 12 0 0 1 682.5 501.1 V463.6 A37 37 0 0 1 719.5 426.6 Z" fill="#8a705e" stroke="#5cb39c" stroke-width="0.8" />
<clipPath id="c682_426"><path d="M719.5 426.6 H805.8 A16 16 0 0 1 821.8 442.6 V479.1 A34 34 0 0 1 787.8 513.1 H694.5 A12 12 0 0 1 682.5 501.1 V463.6 A37 37 0 0 1 719.5 426.6 Z"/></clipPath>
<path d="M682.5 426.6L821.8 513.1M682.5 513.1L821.8 426.6" fill="none" stroke="#6ea58c" stroke-width="0.9" clip-path="url(#c682_426)"/>
<rect x="707.4" y="516.4" width="89.9" height="4.6" fill="#fbf6f1" stroke="#5cb39c" stroke-width="0.8"/>
<text x="732.1" y="520.5" font-size="4" fill="#5f4a3f" textLength="40.5" lengthAdjust="spacingAndGlyphs" font-weight="bold" >PERSPECTIVE VIEW</text>
<path d="M867.8 426.6 H952.9 A16 16 0 0 1 968.9 442.6 V479.1 A34 34 0 0 1 934.9 513.1 H842.8 A12 12 0 0 1 830.8 501.1 V463.6 A37 37 0 0 1 867.8 426.6 Z" fill="#8a705e" stroke="#5cb39c" stroke-width="0.8" />
<clipPath id="c830_426"><path d="M867.8 426.6 H952.9 A16 16 0 0 1 968.9 442.6 V479.1 A34 34 0 0 1 934.9 513.1 H842.8 A12 12 0 0 1 830.8 501.1 V463.6 A37 37 0 0 1 867.8 426.6 Z"/></clipPath>
<path d="M830.8 426.6L968.9 513.1M830.8 513.1L968.9 426.6" fill="none" stroke="#6ea58c" stroke-width="0.9" clip-path="url(#c830_426)"/>
<rect x="860" y="516.4" width="90" height="4.6" fill="#fbf6f1" stroke="#5cb39c" stroke-width="0.8"/>
<text x="884.8" y="520.5" font-size="4" fill="#5f4a3f" textLength="40.5" lengthAdjust="spacingAndGlyphs" font-weight="bold" >PERSPECTIVE VIEW</text>
<rect x="830.6" y="522.8" width="11.2" height="11.0" fill="none" stroke="#c54042" stroke-width="0.9"/><text x="832.7" y="532.9" font-size="13.5" fill="#775d51" textLength="7" lengthAdjust="spacingAndGlyphs" >7</text><rect x="844.8000000000001" y="523.5999999999999" width="127.8" height="7.3" fill="none" stroke="#c54042" stroke-width="0.9"/><text x="845.4000000000001" y="529.6999999999999" font-size="7.9" fill="#775d51" textLength="21.5" lengthAdjust="spacingAndGlyphs" font-weight="bold" >VIEWS</text><line x1="844.8000000000001" y1="533.5" x2="968" y2="533.5" stroke="#775d51" stroke-width="0.9" />
<path d="M561.8 548.5 H968.5 A0 0 0 0 1 968.5 548.5 V586.8 A26 26 0 0 1 942.5 612.8 H535.8 A0 0 0 0 1 535.8 612.8 V574.5 A26 26 0 0 1 561.8 548.5 Z" fill="#fff" stroke="#5cb39c" stroke-width="0.8" />
<path d="M553 551.0L951 610.3M537 612.5L967 548.8" fill="none" stroke="#5cb39c" stroke-width="0.8" />
<rect x="535.8" y="612.8" width="432.9" height="3.3" fill="#050505" />
<rect x="535.8" y="616.1" width="432.9" height="12.9" fill="url(#spk)" />
<line x1="535.8" y1="613.0" x2="968.5" y2="613.0" stroke="#4e9b78" stroke-width="0.8" />
<line x1="535.8" y1="616.1" x2="968.5" y2="616.1" stroke="#3f7a60" stroke-width="0.7" />
<line x1="535.8" y1="629" x2="968.5" y2="629" stroke="#5a9a80" stroke-width="0.8" />
<rect x="535.8" y="629.4" width="432.9" height="1.4" fill="#eee8d8" />
<rect x="865" y="619.3499999999999" width="101.5" height="6.4" fill="none" stroke="#c22c30" stroke-width="0.9"/>
<text x="931.6" y="624.0" font-size="4.1" fill="#fff" textLength="24.5" lengthAdjust="spacingAndGlyphs" font-weight="bold" >SECTION A</text>
<path d="M561.8 633.2 H968.5 A0 0 0 0 1 968.5 633.2 V671.8 A26 26 0 0 1 942.5 697.8 H535.8 A0 0 0 0 1 535.8 697.8 V659.2 A26 26 0 0 1 561.8 633.2 Z" fill="#fff" stroke="#5cb39c" stroke-width="0.8" />
<path d="M553 635.7L951 695.3M537 697.5L967 633.5" fill="none" stroke="#5cb39c" stroke-width="0.8" />
<rect x="535.8" y="697.8" width="432.9" height="3.2" fill="#050505" />
<rect x="535.8" y="701" width="432.9" height="12.8" fill="url(#spk)" />
<line x1="535.8" y1="698.0" x2="968.5" y2="698.0" stroke="#4e9b78" stroke-width="0.8" />
<line x1="535.8" y1="701" x2="968.5" y2="701" stroke="#3f7a60" stroke-width="0.7" />
<line x1="535.8" y1="713.8" x2="968.5" y2="713.8" stroke="#5a9a80" stroke-width="0.8" />
<rect x="535.8" y="714.1999999999999" width="432.9" height="1.4" fill="#eee8d8" />
<rect x="865" y="704.1999999999999" width="101.5" height="6.4" fill="none" stroke="#c22c30" stroke-width="0.9"/>
<text x="934" y="708.9" font-size="4.1" fill="#fff" textLength="24.5" lengthAdjust="spacingAndGlyphs" font-weight="bold" >SECTION B</text>
<rect x="849" y="566.3" width="20.6" height="20.8" fill="#fff" stroke="#c54042" stroke-width="0.9"/>
<path d="M851 578.3h1M854 576.8h1.5M857 578.8h1M852.5 581.3h1M856 582.3h1.2M859.5 581.3h1M861 578.8h1" fill="none" stroke="#a88" stroke-width="0.8" />
<circle cx="871.1" cy="567.3" r="12.8" fill="#8d6a59" stroke="#d0353a" stroke-width="1"/>
<path d="M869.3000000000001 566.8L879.6 557.8M869.3000000000001 566.8V579.9M869.3000000000001 566.8L860.1 560.3M869.3000000000001 566.8L878.1 577.8M869.3000000000001 566.8L861.1 575.3" fill="none" stroke="#d0353a" stroke-width="0.9" />
<rect x="854.4" y="552" width="10.6" height="4.6" fill="#2f8de0" rx="2.3"/>
<path d="M858.6999999999999 554.3h2M859.0 553.2h-1.4a1.1 1.1 0 0 0 0 2.2h1.4M860.4 553.2h1.4a1.1 1.1 0 0 1 0 2.2h-1.4" fill="none" stroke="#fff" stroke-width="0.7" />
<rect x="560" y="651.2" width="20.6" height="20.8" fill="#fff" stroke="#c54042" stroke-width="0.9"/>
<path d="M562 663.2h1M565 661.7h1.5M568 663.7h1M563.5 666.2h1M567 667.2h1.2M570.5 666.2h1M572 663.7h1" fill="none" stroke="#a88" stroke-width="0.8" />
<circle cx="582.3" cy="652.4" r="12.8" fill="#8d6a59" stroke="#d0353a" stroke-width="1"/>
<path d="M580.5 651.9L590.8 642.9M580.5 651.9V665.0M580.5 651.9L571.3 645.4M580.5 651.9L589.3 662.9M580.5 651.9L572.3 660.4" fill="none" stroke="#d0353a" stroke-width="0.9" />
<rect x="565" y="638.2" width="10.6" height="4.6" fill="#2f8de0" rx="2.3"/>
<path d="M569.3 640.5h2M569.6 639.4000000000001h-1.4a1.1 1.1 0 0 0 0 2.2h1.4M571 639.4000000000001h1.4a1.1 1.1 0 0 1 0 2.2h-1.4" fill="none" stroke="#fff" stroke-width="0.7" />
<rect x="536.4" y="717.3" width="11.2" height="11.0" fill="none" stroke="#c54042" stroke-width="0.9"/><text x="538.5" y="727.4" font-size="13.5" fill="#775d51" textLength="7" lengthAdjust="spacingAndGlyphs" >8</text><rect x="550.6" y="718.0999999999999" width="128.4" height="7.3" fill="none" stroke="#c54042" stroke-width="0.9"/><text x="551.2" y="724.1999999999999" font-size="7.9" fill="#775d51" textLength="37.5" lengthAdjust="spacingAndGlyphs" font-weight="bold" >SECTIONS</text><line x1="550.6" y1="727.5" x2="675" y2="727.5" stroke="#775d51" stroke-width="0.9" />
<rect x="867.2" y="717.2" width="101.7" height="15.8" fill="#fff" stroke="#5cb39c" stroke-width="0.8"/>
<text x="927.3" y="721.2" font-size="4.4" fill="#66503f" textLength="41" lengthAdjust="spacingAndGlyphs" font-weight="bold" >UNIVERSITY NAME</text>
<text x="881.3" y="727" font-size="4.4" fill="#66503f" textLength="87" lengthAdjust="spacingAndGlyphs" font-weight="bold" >COLLAGE OF ARCHITECTURE &amp; DESIGN</text>
<text x="955.7" y="732.2" font-size="4.4" fill="#66503f" textLength="12.6" lengthAdjust="spacingAndGlyphs" font-weight="bold" >DATE:</text>
<path d="M149.8 152H968.6M149.8 732.7H968.6" fill="none" stroke="#df86e2" stroke-width="1" />
<path d="M149.8 152V732.7M968.6 152V732.7" fill="none" stroke="#7a5ccc" stroke-width="1" />
<path d="M132 426.2H985.5M132 450.7H985.5M132 518.9H985.5M132 554.4H985.5M132 592.2H985.5M132 604.3H985.5M132 632.5H985.5M132 672.4H985.5M132 681.5H985.5M132 684.5H985.5M132 713.8H985.5M328 143V741.8M517.3 143V741.8M535.5 143V741.8" fill="none" stroke="#45d7e6" stroke-width="1" />
<!-- sec_tools -->
<rect x="0" y="105" width="27.5" height="494.6" fill="#535353" />
<rect x="27.5" y="105" width="1" height="494.6" fill="#4a4a4a" />
<rect x="0" y="599.6" width="28.5" height="1" fill="#484848" />
<path d="M5.5 108.7 L8 110.7 L5.5 112.7 Z M9 108.7 L11.5 110.7 L9 112.7 Z" fill="#e0e0e0" />
<path d="M18.8 108.4 L23.4 113 M23.4 108.4 L18.8 113" fill="none" stroke="#e0e0e0" stroke-width="1.4" />
<path d="M5 119 H21" fill="none" stroke="#3e3e3e" stroke-width="1.2" stroke-dasharray="1 1"/>
<rect x="2" y="217.8" width="23.5" height="0.8" fill="#484848" />
<rect x="2" y="328" width="23.5" height="0.8" fill="#484848" />
<rect x="2" y="404" width="23.5" height="0.8" fill="#484848" />
<rect x="2" y="477" width="23.5" height="0.8" fill="#484848" />
<rect x="2" y="557.5" width="23.5" height="0.8" fill="#484848" />
<rect x="2" y="574" width="23.5" height="0.8" fill="#484848" />
<rect x="2.5" y="127.3" width="20.3" height="16" fill="#2d2d2d" rx="2"/>
<path d="M9.3 130 V141 L12.2 138.3 L17.6 137.3 Z" fill="none" stroke="#e4e4e4" stroke-width="1.1" stroke-linejoin="round"/>
<path d="M9.2 148.2 V159.2 L12.2 156.4 L18 155.4 Z" fill="#c8c8c8" />
<path d="M8.8 165.8 H13.3 L16.2 168.7 V171 M8.8 165.8 V175.5 H13 M13.3 165.8 V168.7 H16.2" fill="none" stroke="#d4d4d4" stroke-width="1" />
<path d="M14.6 171.8 V177.3 L18.6 174.5 Z" fill="#d0d0d0" />
<path d="M6.8 184.3 V194.5 M19.4 184.3 V194.5 M8.6 189.4 H17.6 M10.8 187.2 L8.6 189.4 L10.8 191.6 M15.4 187.2 L17.6 189.4 L15.4 191.6" fill="none" stroke="#d4d4d4" stroke-width="1.2" />
<path d="M8 206.5 V213.2 H17 V206.5" fill="none" stroke="#d4d4d4" stroke-width="1.3" />
<rect x="9.6" y="210" width="5.8" height="2" fill="#d0d0d0" />
<path d="M10 208.3 h1 m1.2 0 h1 m1.2 0 h1" fill="none" stroke="#d4d4d4" stroke-width="1" />
<path d="M10.2 203 L13 205.8 M13 203.4 V205.8 H10.6" fill="none" stroke="#d4d4d4" stroke-width="1" />
<path d="M21.5 215 h-2.4 l2.4 -2.4 z" fill="#d0d0d0" />
<text x="7.4" y="233.2" font-size="14" fill="#dcdcdc" textLength="10.6" lengthAdjust="spacingAndGlyphs" font-weight="bold" class="serif">T</text>
<path d="M21.5 235.5 h-2.4 l2.4 -2.4 z" fill="#d0d0d0" />
<line x1="8" y1="251" x2="17.8" y2="240.8" stroke="#d4d4d4" stroke-width="1.2" />
<path d="M4.8 261.3 h3.6 M6.6 259.5 v3.6" fill="none" stroke="#e0e0e0" stroke-width="1.1" />
<path d="M9.3 270.2 L10.6 264.6 L14.5 261.2 L18 264.6 L14.8 268.7 Z" fill="#d0d0d0" />
<path d="M14.8 260.6 L16.6 258.8 L20.2 262.4 L18.4 264.2 Z" fill="#d0d0d0" />
<path d="M9.6 269.9 L13.4 266" fill="none" stroke="#535353" stroke-width="0.9" />
<path d="M21.5 272 h-2.4 l2.4 -2.4 z" fill="#d0d0d0" />
<path d="M7.4 287.8 L8.4 284.4 L15.6 277.6 L18 280 L10.8 286.8 Z" fill="#d0d0d0" />
<path d="M14.2 278.9 L16.6 281.3" fill="none" stroke="#535353" stroke-width="0.8" />
<path d="M21.5 290 h-2.4 l2.4 -2.4 z" fill="#d0d0d0" />
<ellipse cx="13.2" cy="301" rx="6.6" ry="4.8" fill="none" stroke="#d0d0d0" stroke-width="1.1"/>
<path d="M8.6 297.6 L17.8 304.4 M8.6 304.4 L17.8 297.6" fill="none" stroke="#c8c8c8" stroke-width="0.9" />
<path d="M21.5 308 h-2.4 l2.4 -2.4 z" fill="#d0d0d0" />
<rect x="7.2" y="314.2" width="11.6" height="9" fill="none" stroke="#d0d0d0" stroke-width="1.2"/>
<path d="M21.5 326 h-2.4 l2.4 -2.4 z" fill="#d0d0d0" />
<path d="M6.8 334 L17 342 M6.8 343.5 L17 335.6" fill="none" stroke="#d8d8d8" stroke-width="1.3" />
<circle cx="17.6" cy="334.6" r="1.7" fill="none" stroke="#d8d8d8" stroke-width="1"/><circle cx="17.6" cy="342.8" r="1.7" fill="none" stroke="#d8d8d8" stroke-width="1"/>
<path d="M9.5 353.5 A5.4 5.4 0 1 1 9 360.5" fill="none" stroke="#9a9a9a" stroke-width="1.2" />
<path d="M7 352.3 L11.8 352 L9.6 356.3 Z" fill="#b0b0b0" />
<path d="M21.5 364.5 h-2.4 l2.4 -2.4 z" fill="#d0d0d0" />
<defs><linearGradient id="gsw" x1="0" x2="1" y1="0" y2="0"><stop offset="0" stop-color="#1a1a1a"/><stop offset="1" stop-color="#d8d8d8"/></linearGradient><pattern id="chk" width="3.4" height="3.4" patternUnits="userSpaceOnUse"><rect width="3.4" height="3.4" fill="#d0d0d0"/><rect width="1.7" height="1.7" fill="#2a2a2a"/><rect x="1.7" y="1.7" width="1.7" height="1.7" fill="#2a2a2a"/></pattern><linearGradient id="gfe" x1="0" x2="0" y1="0" y2="1"><stop offset="0" stop-color="#535353" stop-opacity="0.55"/><stop offset="1" stop-color="#222" stop-opacity="0.5"/></linearGradient></defs>
<rect x="7.2" y="370.2" width="11.6" height="10" fill="url(#gsw)" stroke="#d0d0d0" stroke-width="0.9"/>
<rect x="7.2" y="388" width="11.6" height="10.2" fill="url(#chk)" stroke="#d0d0d0" stroke-width="0.9"/>
<rect x="7.6" y="388.4" width="10.8" height="9.4" fill="url(#gfe)" />
<path d="M7.8 408.5 H17.9 V416.3 L15.4 418.9 H7.8 Z" fill="#d4d4d4" />
<path d="M9.3 411 H16.4 M9.3 413.2 H16.4 M9.3 415.4 H13.5" fill="none" stroke="#535353" stroke-width="0.9" />
<path d="M7.2 437.4 L8 434.6 L13.8 428.8 L16.2 431.2 L10.4 437 Z" fill="none" stroke="#d0d0d0" stroke-width="1" />
<path d="M13 427.8 L17.2 432 M14.6 429.4 L16.6 427.2 a1.6 1.6 0 0 1 2.3 2.3 L16.8 431.6" fill="#d8d8d8" stroke="#d8d8d8" stroke-width="1.3" />
<path d="M21.5 440 h-2.4 l2.4 -2.4 z" fill="#d0d0d0" />
<path d="M9.2 450.6 H16.6 V453 Q16.4 456.4 13 456.4 Q10 456.4 9.2 454 Z" fill="#d4d4d4" />
<path d="M9.8 451.4 L8.8 446.8 M11.9 450.8 L11.5 444.9 M14.1 450.8 L14.5 444.9 M16.1 451.4 L17.3 446.8 M9.6 454 L7.2 451.3" fill="none" stroke="#d4d4d4" stroke-width="1.7" stroke-linecap="round"/>
<circle cx="10.6" cy="467" r="3.7" fill="none" stroke="#d0d0d0" stroke-width="1.2"/>
<line x1="13.4" y1="469.8" x2="17.8" y2="473.6" stroke="#d0d0d0" stroke-width="1.5" />
<rect x="1.5" y="480.8" width="6" height="6" fill="#fff" stroke="#222" stroke-width="0.8"/>
<rect x="4.6" y="483.8" width="5.6" height="5.6" fill="#1c1c1c" stroke="#d0d0d0" stroke-width="0.8"/>
<line x1="1.9" y1="486.4" x2="7" y2="481.2" stroke="#e0171e" stroke-width="0.9" />
<path d="M16.5 483 q4.6 -0.6 5 5" fill="none" stroke="#d0d0d0" stroke-width="1.2" />
<path d="M16 481 v4.4 l-2.4 -2.2 z M19.4 487.6 h4.4 l-2.2 2.6 z" fill="#d0d0d0" />
<rect x="2.2" y="494.8" width="14.5" height="13.8" fill="#fff" />
<line x1="2.6" y1="508.2" x2="16.3" y2="495.2" stroke="#e0171e" stroke-width="1.4" />
<rect x="8.9" y="501.5" width="14.5" height="14.2" fill="#050505" />
<rect x="12.4" y="505" width="7.6" height="7.4" fill="#5c5c5c" />
<rect x="3.3" y="522.4" width="8" height="8.6" fill="#2d2d2d" rx="1.2"/>
<rect x="5.3" y="524.6" width="4" height="4.2" fill="none" stroke="#d8d8d8" stroke-width="1"/>
<text x="16.6" y="530.4" font-size="9.5" fill="#dcdcdc" font-weight="bold" class="serif">T</text>
<rect x="2.2" y="536.5" width="21.2" height="16.3" fill="#2d2d2d" rx="2"/>
<rect x="6.8" y="538.8" width="12" height="11" fill="#000" stroke="#cfcfcf" stroke-width="0.8"/>
<path d="M22.6 552 h-2.4 l2.4 -2.4 z" fill="#d0d0d0" />
<rect x="9.5" y="565.2" width="8.6" height="4.8" fill="#c4c4c4" />
<path d="M8.6 563.5 v6.5 M10.5 562.8 h1 m1.2 0 h1 m1.2 0 h1 m1.2 0 h1" fill="none" stroke="#c8c8c8" stroke-width="0.9" />
<rect x="2.2" y="578.9" width="21.2" height="16.3" fill="#2d2d2d" rx="2"/>
<rect x="8.6" y="582.3" width="8.8" height="8.6" fill="#8c8c8c" stroke="#d8d8d8" stroke-width="0.9"/>
<path d="M10.5 584.3 h1.6 v1.6 h-1.6 z M13.8 584.3 h1.6 v1.6 h-1.6 z M10.5 587.4 h1.6 v1.6 h-1.6 z M13.8 587.4 h1.6 v1.6 h-1.6 z" fill="#e8e8e8" />
<path d="M22.6 594.4 h-2.4 l2.4 -2.4 z" fill="#d0d0d0" />
<!-- sec_right -->
<rect x="1229" y="76" width="216" height="710" fill="#535353" />
<rect x="1229" y="76" width="216" height="9" fill="#404040" />
<rect x="1229" y="76" width="2" height="710" fill="#3e3e3e" />
<rect x="1259" y="85" width="2" height="701" fill="#444444" />
<path d="M1249.5 78 L1247 80 L1249.5 82 Z M1253.5 78 L1251 80 L1253.5 82 Z" fill="#d8d8d8" />
<path d="M1436 78 L1438.5 80 L1436 82 Z M1440 78 L1442.5 80 L1440 82 Z" fill="#d8d8d8" />
<rect x="1231" y="114.8" width="28" height="1.6" fill="#3c3c3c" />
<path d="M1238 88.0H1252" fill="none" stroke="#3a3a3a" stroke-width="1.6" stroke-dasharray="1 1"/>
<rect x="1231" y="145.8" width="28" height="1.6" fill="#3c3c3c" />
<path d="M1238 119.0H1252" fill="none" stroke="#3a3a3a" stroke-width="1.6" stroke-dasharray="1 1"/>
<rect x="1231" y="176.8" width="28" height="1.6" fill="#3c3c3c" />
<path d="M1238 150.0H1252" fill="none" stroke="#3a3a3a" stroke-width="1.6" stroke-dasharray="1 1"/>
<rect x="1231" y="207.8" width="28" height="1.6" fill="#3c3c3c" />
<path d="M1238 181.0H1252" fill="none" stroke="#3a3a3a" stroke-width="1.6" stroke-dasharray="1 1"/>
<rect x="1240" y="96" width="5" height="1.8" fill="#e8e8e8" />
<rect x="1243" y="99" width="9" height="3.4" fill="#c0c0c0" />
<rect x="1240" y="103.7" width="5" height="1.8" fill="#e8e8e8" />
<rect x="1243" y="106.5" width="9" height="2.6" fill="#c0c0c0" />
<text x="1239.4" y="137" font-size="14.5" fill="#ececec" font-weight="bold" class="serif">T</text>
<path d="M1240 139.8 q1.2 -1.6 2.4 0 t2.4 0 t2.4 0 t2.4 0 t2.4 0" fill="none" stroke="#e0e0e0" stroke-width="1" />
<circle cx="1243.5" cy="162.5" r="5" fill="#d8d8d8"/>
<path d="M1240.5 160.5 l2.5 -1.5 l1 2.2 l-2 1 z M1244.5 163.5 l2.2 -0.6 l0.6 2 z" fill="#535353" />
<path d="M1246 165.5 l4 4" fill="none" stroke="#535353" stroke-width="4.2" stroke-linecap="round"/>
<path d="M1246 165.5 l4 4" fill="none" stroke="#d8d8d8" stroke-width="2.6" stroke-linecap="round"/>
<path d="M1240.8 188 H1248.4 V202 L1244.6 198.6 L1240.8 202 Z" fill="#dcdcdc" />
<rect x="1261" y="85" width="184" height="20.3" fill="#454545" />
<rect x="1303" y="85" width="47.6" height="20.3" fill="#535353" />
<rect x="1389.5" y="85" width="1" height="20.3" fill="#3e3e3e" />
<rect x="1302.5" y="85" width="0.8" height="20.3" fill="#3e3e3e" />
<rect x="1350.4" y="85" width="0.8" height="20.3" fill="#3e3e3e" />
<text x="1270" y="98.6" font-size="9.5" fill="#b4b4b4" textLength="23.2" lengthAdjust="spacingAndGlyphs" font-weight="bold" >Pages</text>
<path d="M1309.2 94 L1311 91.7 L1312.8 94 M1309.2 96.6 L1311 98.9 L1312.8 96.6" fill="none" stroke="#d0d0d0" stroke-width="0.9" />
<text x="1316.6" y="98.6" font-size="9.5" fill="#fafafa" textLength="25.2" lengthAdjust="spacingAndGlyphs" font-weight="bold" >Layers</text>
<text x="1359.7" y="98.6" font-size="9.5" fill="#b4b4b4" textLength="20.3" lengthAdjust="spacingAndGlyphs" font-weight="bold" >Links</text>
<rect x="1433.4" y="92.4" width="7.6" height="1.3" fill="#a4a4a4" />
<rect x="1433.4" y="94.4" width="7.6" height="1.3" fill="#a4a4a4" />
<rect x="1433.4" y="96.4" width="7.6" height="1.3" fill="#a4a4a4" />
<rect x="1261" y="123.0" width="175.5" height="0.8" fill="#5b5b5b" />
<path d="M1264.8 115.2 Q1269 110.60000000000001 1273.2 115.2 Q1269 119.8 1264.8 115.2Z" fill="#e2e2e2" /><circle cx="1269" cy="115.2" r="1.75" fill="#4a4a4a"/><circle cx="1269" cy="115.2" r="0.8" fill="#e8e8e8"/>
<rect x="1294.5" y="107.5" width="3.5" height="15.4" fill="#e2131a" />
<path d="M1302.5 113.8 L1305.2 116.6 L1307.9 113.8" fill="none" stroke="#c8c8c8" stroke-width="1" />
<text x="1312" y="118.3" font-size="9.2" fill="#f2f2f2" textLength="31.5" lengthAdjust="spacingAndGlyphs" >Headings</text>
<rect x="1424.3" y="112.6" width="4.6" height="5" fill="none" stroke="#181818" stroke-width="1.1"/>
<rect x="1298" y="123.5" width="138.5" height="16.6" fill="#4a6b95" />
<rect x="1261" y="139.6" width="175.5" height="0.8" fill="#5b5b5b" />
<path d="M1264.8 131.8 Q1269 127.20000000000002 1273.2 131.8 Q1269 136.4 1264.8 131.8Z" fill="#e2e2e2" /><circle cx="1269" cy="131.8" r="1.75" fill="#4a4a4a"/><circle cx="1269" cy="131.8" r="0.8" fill="#e8e8e8"/>
<rect x="1294.5" y="124.1" width="3.5" height="15.4" fill="#e2131a" />
<text x="1322" y="134.9" font-size="9.2" fill="#ffffff" textLength="45.5" lengthAdjust="spacingAndGlyphs" font-weight="bold" >&lt;Section B&gt;</text>
<rect x="1424.3" y="129.2" width="4.6" height="5" fill="none" stroke="#16243a" stroke-width="1.1"/>
<rect x="1261" y="156.3" width="175.5" height="0.8" fill="#5b5b5b" />
<path d="M1264.8 148.4 Q1269 143.8 1273.2 148.4 Q1269 153.0 1264.8 148.4Z" fill="#e2e2e2" /><circle cx="1269" cy="148.4" r="1.75" fill="#4a4a4a"/><circle cx="1269" cy="148.4" r="0.8" fill="#e8e8e8"/>
<rect x="1294.5" y="140.7" width="3.5" height="15.4" fill="#e2131a" />
<text x="1322" y="151.5" font-size="9.2" fill="#f0f0f0" textLength="39.5" lengthAdjust="spacingAndGlyphs" >&lt;Section a&gt;</text>
<rect x="1424.3" y="145.8" width="4.6" height="5" fill="none" stroke="#181818" stroke-width="1.1"/>
<rect x="1261" y="172.9" width="175.5" height="0.8" fill="#5b5b5b" />
<path d="M1264.8 165.1 Q1269 160.5 1273.2 165.1 Q1269 169.7 1264.8 165.1Z" fill="#e2e2e2" /><circle cx="1269" cy="165.1" r="1.75" fill="#4a4a4a"/><circle cx="1269" cy="165.1" r="0.8" fill="#e8e8e8"/>
<rect x="1294.5" y="157.4" width="3.5" height="15.4" fill="#e2131a" />
<path d="M1314.6 162.3 L1317.2 165.1 L1314.6 167.9" fill="none" stroke="#b8b8b8" stroke-width="1" />
<text x="1322" y="168.2" font-size="9.2" fill="#f0f0f0" textLength="30" lengthAdjust="spacingAndGlyphs" >&lt;group&gt;</text>
<rect x="1424.3" y="162.5" width="4.6" height="5" fill="none" stroke="#181818" stroke-width="1.1"/>
<rect x="1261" y="189.5" width="175.5" height="0.8" fill="#5b5b5b" />
<path d="M1264.8 181.7 Q1269 177.1 1273.2 181.7 Q1269 186.29999999999998 1264.8 181.7Z" fill="#e2e2e2" /><circle cx="1269" cy="181.7" r="1.75" fill="#4a4a4a"/><circle cx="1269" cy="181.7" r="0.8" fill="#e8e8e8"/>
<rect x="1294.5" y="174.0" width="3.5" height="15.4" fill="#e2131a" />
<path d="M1314.6 178.9 L1317.2 181.7 L1314.6 184.5" fill="none" stroke="#b8b8b8" stroke-width="1" />
<text x="1322" y="184.8" font-size="9.2" fill="#f0f0f0" textLength="30" lengthAdjust="spacingAndGlyphs" >&lt;group&gt;</text>
<rect x="1424.3" y="179.1" width="4.6" height="5" fill="none" stroke="#181818" stroke-width="1.1"/>
<rect x="1261" y="206.1" width="175.5" height="0.8" fill="#5b5b5b" />
<path d="M1264.8 198.3 Q1269 193.70000000000002 1273.2 198.3 Q1269 202.9 1264.8 198.3Z" fill="#e2e2e2" /><circle cx="1269" cy="198.3" r="1.75" fill="#4a4a4a"/><circle cx="1269" cy="198.3" r="0.8" fill="#e8e8e8"/>
<rect x="1294.5" y="190.6" width="3.5" height="15.4" fill="#e2131a" />
<text x="1322" y="201.4" font-size="9.2" fill="#f0f0f0" textLength="33.5" lengthAdjust="spacingAndGlyphs" >&lt;Zoning&gt;</text>
<rect x="1424.3" y="195.7" width="4.6" height="5" fill="none" stroke="#181818" stroke-width="1.1"/>
<rect x="1261" y="222.7" width="175.5" height="0.8" fill="#5b5b5b" />
<path d="M1264.8 214.9 Q1269 210.3 1273.2 214.9 Q1269 219.5 1264.8 214.9Z" fill="#e2e2e2" /><circle cx="1269" cy="214.9" r="1.75" fill="#4a4a4a"/><circle cx="1269" cy="214.9" r="0.8" fill="#e8e8e8"/>
<rect x="1294.5" y="207.2" width="3.5" height="15.4" fill="#e2131a" />
<text x="1322" y="218.0" font-size="9.2" fill="#f0f0f0" textLength="62" lengthAdjust="spacingAndGlyphs" >&lt;Area calculation&gt;</text>
<rect x="1424.3" y="212.3" width="4.6" height="5" fill="none" stroke="#181818" stroke-width="1.1"/>
<rect x="1261" y="239.3" width="175.5" height="0.8" fill="#5b5b5b" />
<path d="M1264.8 231.5 Q1269 226.9 1273.2 231.5 Q1269 236.1 1264.8 231.5Z" fill="#e2e2e2" /><circle cx="1269" cy="231.5" r="1.75" fill="#4a4a4a"/><circle cx="1269" cy="231.5" r="0.8" fill="#e8e8e8"/>
<rect x="1294.5" y="223.8" width="3.5" height="15.4" fill="#e2131a" />
<path d="M1314.6 228.7 L1317.2 231.5 L1314.6 234.3" fill="none" stroke="#b8b8b8" stroke-width="1" />
<text x="1322" y="234.6" font-size="9.2" fill="#f0f0f0" textLength="30" lengthAdjust="spacingAndGlyphs" >&lt;group&gt;</text>
<rect x="1424.3" y="228.9" width="4.6" height="5" fill="none" stroke="#181818" stroke-width="1.1"/>
<rect x="1261" y="256.0" width="175.5" height="0.8" fill="#5b5b5b" />
<path d="M1264.8 248.1 Q1269 243.5 1273.2 248.1 Q1269 252.7 1264.8 248.1Z" fill="#e2e2e2" /><circle cx="1269" cy="248.1" r="1.75" fill="#4a4a4a"/><circle cx="1269" cy="248.1" r="0.8" fill="#e8e8e8"/>
<rect x="1294.5" y="240.4" width="3.5" height="15.4" fill="#e2131a" />
<path d="M1314.6 245.3 L1317.2 248.1 L1314.6 250.9" fill="none" stroke="#b8b8b8" stroke-width="1" />
<text x="1322" y="251.2" font-size="9.2" fill="#f0f0f0" textLength="30" lengthAdjust="spacingAndGlyphs" >&lt;group&gt;</text>
<rect x="1424.3" y="245.5" width="4.6" height="5" fill="none" stroke="#181818" stroke-width="1.1"/>
<rect x="1261" y="272.6" width="175.5" height="0.8" fill="#5b5b5b" />
<path d="M1264.8 264.8 Q1269 260.2 1273.2 264.8 Q1269 269.40000000000003 1264.8 264.8Z" fill="#e2e2e2" /><circle cx="1269" cy="264.8" r="1.75" fill="#4a4a4a"/><circle cx="1269" cy="264.8" r="0.8" fill="#e8e8e8"/>
<rect x="1294.5" y="257.1" width="3.5" height="15.4" fill="#e2131a" />
<path d="M1314.6 262.0 L1317.2 264.8 L1314.6 267.6" fill="none" stroke="#b8b8b8" stroke-width="1" />
<text x="1322" y="267.9" font-size="9.2" fill="#f0f0f0" textLength="30" lengthAdjust="spacingAndGlyphs" >&lt;group&gt;</text>
<rect x="1424.3" y="262.2" width="4.6" height="5" fill="none" stroke="#181818" stroke-width="1.1"/>
<rect x="1261" y="289.2" width="175.5" height="0.8" fill="#5b5b5b" />
<path d="M1264.8 281.4 Q1269 276.79999999999995 1273.2 281.4 Q1269 286.0 1264.8 281.4Z" fill="#e2e2e2" /><circle cx="1269" cy="281.4" r="1.75" fill="#4a4a4a"/><circle cx="1269" cy="281.4" r="0.8" fill="#e8e8e8"/>
<rect x="1294.5" y="273.7" width="3.5" height="15.4" fill="#e2131a" />
<path d="M1314.6 278.6 L1317.2 281.4 L1314.6 284.2" fill="none" stroke="#b8b8b8" stroke-width="1" />
<text x="1322" y="284.5" font-size="9.2" fill="#f0f0f0" textLength="30" lengthAdjust="spacingAndGlyphs" >&lt;group&gt;</text>
<rect x="1424.3" y="278.8" width="4.6" height="5" fill="none" stroke="#181818" stroke-width="1.1"/>
<rect x="1261" y="305.8" width="175.5" height="0.8" fill="#5b5b5b" />
<path d="M1264.8 298.0 Q1269 293.4 1273.2 298.0 Q1269 302.6 1264.8 298.0Z" fill="#e2e2e2" /><circle cx="1269" cy="298.0" r="1.75" fill="#4a4a4a"/><circle cx="1269" cy="298.0" r="0.8" fill="#e8e8e8"/>
<rect x="1294.5" y="290.3" width="3.5" height="15.4" fill="#e2131a" />
<path d="M1314.6 295.2 L1317.2 298.0 L1314.6 300.8" fill="none" stroke="#b8b8b8" stroke-width="1" />
<text x="1322" y="301.1" font-size="9.2" fill="#f0f0f0" textLength="30" lengthAdjust="spacingAndGlyphs" >&lt;group&gt;</text>
<rect x="1424.3" y="295.4" width="4.6" height="5" fill="none" stroke="#181818" stroke-width="1.1"/>
<rect x="1261" y="322.4" width="175.5" height="0.8" fill="#5b5b5b" />
<path d="M1264.8 314.6 Q1269 310.0 1273.2 314.6 Q1269 319.20000000000005 1264.8 314.6Z" fill="#e2e2e2" /><circle cx="1269" cy="314.6" r="1.75" fill="#4a4a4a"/><circle cx="1269" cy="314.6" r="0.8" fill="#e8e8e8"/>
<rect x="1294.5" y="306.9" width="3.5" height="15.4" fill="#e2131a" />
<path d="M1314.6 311.8 L1317.2 314.6 L1314.6 317.4" fill="none" stroke="#b8b8b8" stroke-width="1" />
<text x="1322" y="317.7" font-size="9.2" fill="#f0f0f0" textLength="30" lengthAdjust="spacingAndGlyphs" >&lt;group&gt;</text>
<rect x="1424.3" y="312.0" width="4.6" height="5" fill="none" stroke="#181818" stroke-width="1.1"/>
<rect x="1261" y="339.0" width="175.5" height="0.8" fill="#5b5b5b" />
<path d="M1264.8 331.2 Q1269 326.59999999999997 1273.2 331.2 Q1269 335.8 1264.8 331.2Z" fill="#e2e2e2" /><circle cx="1269" cy="331.2" r="1.75" fill="#4a4a4a"/><circle cx="1269" cy="331.2" r="0.8" fill="#e8e8e8"/>
<rect x="1294.5" y="323.5" width="3.5" height="15.4" fill="#e2131a" />
<path d="M1314.6 328.4 L1317.2 331.2 L1314.6 334.0" fill="none" stroke="#b8b8b8" stroke-width="1" />
<text x="1322" y="334.3" font-size="9.2" fill="#f0f0f0" textLength="30" lengthAdjust="spacingAndGlyphs" >&lt;group&gt;</text>
<rect x="1424.3" y="328.6" width="4.6" height="5" fill="none" stroke="#181818" stroke-width="1.1"/>
<rect x="1261" y="355.7" width="175.5" height="0.8" fill="#5b5b5b" />
<path d="M1264.8 347.8 Q1269 343.2 1273.2 347.8 Q1269 352.40000000000003 1264.8 347.8Z" fill="#e2e2e2" /><circle cx="1269" cy="347.8" r="1.75" fill="#4a4a4a"/><circle cx="1269" cy="347.8" r="0.8" fill="#e8e8e8"/>
<rect x="1294.5" y="340.1" width="3.5" height="15.4" fill="#e2131a" />
<path d="M1314.6 345.0 L1317.2 347.8 L1314.6 350.6" fill="none" stroke="#b8b8b8" stroke-width="1" />
<text x="1322" y="350.9" font-size="9.2" fill="#f0f0f0" textLength="30" lengthAdjust="spacingAndGlyphs" >&lt;group&gt;</text>
<rect x="1424.3" y="345.2" width="4.6" height="5" fill="none" stroke="#181818" stroke-width="1.1"/>
<rect x="1261" y="372.3" width="175.5" height="0.8" fill="#5b5b5b" />
<path d="M1264.8 364.5 Q1269 359.9 1273.2 364.5 Q1269 369.1 1264.8 364.5Z" fill="#e2e2e2" /><circle cx="1269" cy="364.5" r="1.75" fill="#4a4a4a"/><circle cx="1269" cy="364.5" r="0.8" fill="#e8e8e8"/>
<rect x="1294.5" y="356.8" width="3.5" height="15.4" fill="#e2131a" />
<text x="1322" y="367.6" font-size="9.2" fill="#f0f0f0" textLength="90" lengthAdjust="spacingAndGlyphs" >&lt;Welcom...rtfolio Maker...&gt;</text>
<rect x="1424.3" y="361.9" width="4.6" height="5" fill="none" stroke="#181818" stroke-width="1.1"/>
<rect x="1261" y="388.9" width="175.5" height="0.8" fill="#5b5b5b" />
<path d="M1264.8 381.1 Q1269 376.5 1273.2 381.1 Q1269 385.70000000000005 1264.8 381.1Z" fill="#e2e2e2" /><circle cx="1269" cy="381.1" r="1.75" fill="#4a4a4a"/><circle cx="1269" cy="381.1" r="0.8" fill="#e8e8e8"/>
<rect x="1294.5" y="373.4" width="3.5" height="15.4" fill="#e2131a" />
<text x="1322" y="384.2" font-size="9.2" fill="#f0f0f0" textLength="90" lengthAdjust="spacingAndGlyphs" >&lt;Welcom...rtfolio Maker...&gt;</text>
<rect x="1424.3" y="378.5" width="4.6" height="5" fill="none" stroke="#181818" stroke-width="1.1"/>
<rect x="1261" y="405.5" width="175.5" height="0.8" fill="#5b5b5b" />
<path d="M1264.8 397.7 Q1269 393.09999999999997 1273.2 397.7 Q1269 402.3 1264.8 397.7Z" fill="#e2e2e2" /><circle cx="1269" cy="397.7" r="1.75" fill="#4a4a4a"/><circle cx="1269" cy="397.7" r="0.8" fill="#e8e8e8"/>
<rect x="1294.5" y="390.0" width="3.5" height="15.4" fill="#e2131a" />
<text x="1322" y="400.8" font-size="9.2" fill="#f0f0f0" textLength="90" lengthAdjust="spacingAndGlyphs" >&lt;Welcom...rtfolio Maker...&gt;</text>
<rect x="1424.3" y="395.1" width="4.6" height="5" fill="none" stroke="#181818" stroke-width="1.1"/>
<rect x="1261" y="422.1" width="175.5" height="0.8" fill="#5b5b5b" />
<path d="M1264.8 414.3 Q1269 409.7 1273.2 414.3 Q1269 418.90000000000003 1264.8 414.3Z" fill="#e2e2e2" /><circle cx="1269" cy="414.3" r="1.75" fill="#4a4a4a"/><circle cx="1269" cy="414.3" r="0.8" fill="#e8e8e8"/>
<rect x="1294.5" y="406.6" width="3.5" height="15.4" fill="#e2131a" />
<text x="1322" y="417.4" font-size="9.2" fill="#f0f0f0" textLength="90" lengthAdjust="spacingAndGlyphs" >&lt;Welcom...rtfolio Maker...&gt;</text>
<rect x="1424.3" y="411.7" width="4.6" height="5" fill="none" stroke="#181818" stroke-width="1.1"/>
<rect x="1261" y="438.7" width="175.5" height="0.8" fill="#5b5b5b" />
<path d="M1264.8 430.9 Q1269 426.29999999999995 1273.2 430.9 Q1269 435.5 1264.8 430.9Z" fill="#e2e2e2" /><circle cx="1269" cy="430.9" r="1.75" fill="#4a4a4a"/><circle cx="1269" cy="430.9" r="0.8" fill="#e8e8e8"/>
<rect x="1294.5" y="423.2" width="3.5" height="15.4" fill="#e2131a" />
<text x="1322" y="434.0" font-size="9.2" fill="#f0f0f0" textLength="19.5" lengthAdjust="spacingAndGlyphs" >&lt;line&gt;</text>
<rect x="1424.3" y="428.3" width="4.6" height="5" fill="none" stroke="#181818" stroke-width="1.1"/>
<rect x="1261" y="455.4" width="175.5" height="0.8" fill="#5b5b5b" />
<path d="M1264.8 447.5 Q1269 442.9 1273.2 447.5 Q1269 452.1 1264.8 447.5Z" fill="#e2e2e2" /><circle cx="1269" cy="447.5" r="1.75" fill="#4a4a4a"/><circle cx="1269" cy="447.5" r="0.8" fill="#e8e8e8"/>
<rect x="1294.5" y="439.8" width="3.5" height="15.4" fill="#e2131a" />
<text x="1322" y="450.6" font-size="9.2" fill="#f0f0f0" textLength="89" lengthAdjust="spacingAndGlyphs" >&lt;Name :...123456789Pr...&gt;</text>
<rect x="1424.3" y="444.9" width="4.6" height="5" fill="none" stroke="#181818" stroke-width="1.1"/>
<rect x="1261" y="472.0" width="175.5" height="0.8" fill="#5b5b5b" />
<path d="M1264.8 464.2 Q1269 459.59999999999997 1273.2 464.2 Q1269 468.8 1264.8 464.2Z" fill="#e2e2e2" /><circle cx="1269" cy="464.2" r="1.75" fill="#4a4a4a"/><circle cx="1269" cy="464.2" r="0.8" fill="#e8e8e8"/>
<rect x="1294.5" y="456.5" width="3.5" height="15.4" fill="#e2131a" />
<text x="1322" y="467.3" font-size="9.2" fill="#f0f0f0" textLength="50.5" lengthAdjust="spacingAndGlyphs" >&lt;Final Project&gt;</text>
<rect x="1424.3" y="461.6" width="4.6" height="5" fill="none" stroke="#181818" stroke-width="1.1"/>
<rect x="1261" y="488.6" width="175.5" height="0.8" fill="#5b5b5b" />
<path d="M1264.8 480.8 Q1269 476.2 1273.2 480.8 Q1269 485.40000000000003 1264.8 480.8Z" fill="#e2e2e2" /><circle cx="1269" cy="480.8" r="1.75" fill="#4a4a4a"/><circle cx="1269" cy="480.8" r="0.8" fill="#e8e8e8"/>
<rect x="1294.5" y="473.1" width="3.5" height="15.4" fill="#e2131a" />
<text x="1322" y="483.9" font-size="9.2" fill="#f0f0f0" textLength="28" lengthAdjust="spacingAndGlyphs" >&lt;name&gt;</text>
<rect x="1424.3" y="478.2" width="4.6" height="5" fill="none" stroke="#181818" stroke-width="1.1"/>
<rect x="1261" y="505.2" width="175.5" height="0.8" fill="#5b5b5b" />
<path d="M1264.8 497.4 Q1269 492.79999999999995 1273.2 497.4 Q1269 502.0 1264.8 497.4Z" fill="#e2e2e2" /><circle cx="1269" cy="497.4" r="1.75" fill="#4a4a4a"/><circle cx="1269" cy="497.4" r="0.8" fill="#e8e8e8"/>
<rect x="1294.5" y="489.7" width="3.5" height="15.4" fill="#4fe653" />
<path d="M1302.5 496.0 L1305.2 498.8 L1307.9 496.0" fill="none" stroke="#c8c8c8" stroke-width="1" />
<text x="1312" y="500.5" font-size="9.2" fill="#f2f2f2" textLength="31" lengthAdjust="spacingAndGlyphs" >Drawings</text>
<path d="M1409 499.9 l1 -2.8 l4.2 -4.2 l1.8 1.8 l-4.2 4.2 z" fill="#d8d8d8" />
<rect x="1424.3" y="494.8" width="4.6" height="5" fill="none" stroke="#181818" stroke-width="1.1"/>
<rect x="1261" y="521.8" width="175.5" height="0.8" fill="#5b5b5b" />
<path d="M1264.8 514.0 Q1269 509.4 1273.2 514.0 Q1269 518.6 1264.8 514.0Z" fill="#e2e2e2" /><circle cx="1269" cy="514.0" r="1.75" fill="#4a4a4a"/><circle cx="1269" cy="514.0" r="0.8" fill="#e8e8e8"/>
<rect x="1294.5" y="506.3" width="3.5" height="15.4" fill="#4fe653" />
<text x="1322" y="517.1" font-size="9.2" fill="#f0f0f0" textLength="90" lengthAdjust="spacingAndGlyphs" >&lt;Univer...llage Of Archi...&gt;</text>
<rect x="1424.3" y="511.4" width="4.6" height="5" fill="none" stroke="#181818" stroke-width="1.1"/>
<rect x="1261" y="538.4" width="175.5" height="0.8" fill="#5b5b5b" />
<path d="M1264.8 530.6 Q1269 526.0 1273.2 530.6 Q1269 535.2 1264.8 530.6Z" fill="#e2e2e2" /><circle cx="1269" cy="530.6" r="1.75" fill="#4a4a4a"/><circle cx="1269" cy="530.6" r="0.8" fill="#e8e8e8"/>
<rect x="1294.5" y="522.9" width="3.5" height="15.4" fill="#4fe653" />
<text x="1322" y="533.7" font-size="9.2" fill="#f0f0f0" textLength="64.5" lengthAdjust="spacingAndGlyphs" >&lt;perspective view&gt;</text>
<rect x="1424.3" y="528.0" width="4.6" height="5" fill="none" stroke="#181818" stroke-width="1.1"/>
<rect x="1261" y="555.1" width="175.5" height="0.8" fill="#5b5b5b" />
<path d="M1264.8 547.3 Q1269 542.6999999999999 1273.2 547.3 Q1269 551.9 1264.8 547.3Z" fill="#e2e2e2" /><circle cx="1269" cy="547.3" r="1.75" fill="#4a4a4a"/><circle cx="1269" cy="547.3" r="0.8" fill="#e8e8e8"/>
<rect x="1294.5" y="539.5" width="3.5" height="15.4" fill="#4fe653" />
<text x="1322" y="550.4" font-size="9.2" fill="#f0f0f0" textLength="64.5" lengthAdjust="spacingAndGlyphs" >&lt;perspective view&gt;</text>
<rect x="1424.3" y="544.7" width="4.6" height="5" fill="none" stroke="#181818" stroke-width="1.1"/>
<rect x="1261" y="571.7" width="175.5" height="0.8" fill="#5b5b5b" />
<path d="M1264.8 563.9 Q1269 559.3 1273.2 563.9 Q1269 568.5 1264.8 563.9Z" fill="#e2e2e2" /><circle cx="1269" cy="563.9" r="1.75" fill="#4a4a4a"/><circle cx="1269" cy="563.9" r="0.8" fill="#e8e8e8"/>
<rect x="1294.5" y="556.2" width="3.5" height="15.4" fill="#4fe653" />
<text x="1322" y="567.0" font-size="9.2" fill="#f0f0f0" textLength="64.5" lengthAdjust="spacingAndGlyphs" >&lt;perspective view&gt;</text>
<rect x="1424.3" y="561.3" width="4.6" height="5" fill="none" stroke="#181818" stroke-width="1.1"/>
<rect x="1261" y="588.3" width="175.5" height="0.8" fill="#5b5b5b" />
<path d="M1264.8 580.5 Q1269 575.9 1273.2 580.5 Q1269 585.1 1264.8 580.5Z" fill="#e2e2e2" /><circle cx="1269" cy="580.5" r="1.75" fill="#4a4a4a"/><circle cx="1269" cy="580.5" r="0.8" fill="#e8e8e8"/>
<rect x="1294.5" y="572.8" width="3.5" height="15.4" fill="#4fe653" />
<text x="1322" y="583.6" font-size="9.2" fill="#f0f0f0" textLength="64.5" lengthAdjust="spacingAndGlyphs" >&lt;perspective view&gt;</text>
<rect x="1424.3" y="577.9" width="4.6" height="5" fill="none" stroke="#181818" stroke-width="1.1"/>
<rect x="1261" y="604.9" width="175.5" height="0.8" fill="#5b5b5b" />
<path d="M1264.8 597.1 Q1269 592.5 1273.2 597.1 Q1269 601.7 1264.8 597.1Z" fill="#e2e2e2" /><circle cx="1269" cy="597.1" r="1.75" fill="#4a4a4a"/><circle cx="1269" cy="597.1" r="0.8" fill="#e8e8e8"/>
<rect x="1294.5" y="589.4" width="3.5" height="15.4" fill="#4fe653" />
<text x="1322" y="600.2" font-size="9.2" fill="#f0f0f0" textLength="64.5" lengthAdjust="spacingAndGlyphs" >&lt;perspective view&gt;</text>
<rect x="1424.3" y="594.5" width="4.6" height="5" fill="none" stroke="#181818" stroke-width="1.1"/>
<rect x="1261" y="621.5" width="175.5" height="0.8" fill="#5b5b5b" />
<path d="M1264.8 613.7 Q1269 609.1 1273.2 613.7 Q1269 618.3000000000001 1264.8 613.7Z" fill="#e2e2e2" /><circle cx="1269" cy="613.7" r="1.75" fill="#4a4a4a"/><circle cx="1269" cy="613.7" r="0.8" fill="#e8e8e8"/>
<rect x="1294.5" y="606.0" width="3.5" height="15.4" fill="#4fe653" />
<text x="1322" y="616.8" font-size="9.2" fill="#f0f0f0" textLength="64.5" lengthAdjust="spacingAndGlyphs" >&lt;perspective view&gt;</text>
<rect x="1424.3" y="611.1" width="4.6" height="5" fill="none" stroke="#181818" stroke-width="1.1"/>
<rect x="1277.5" y="105.3" width="0.7" height="515.5" fill="#5b5b5b" />
<rect x="1293.4" y="105.3" width="0.7" height="515.5" fill="#5b5b5b" />
<rect x="1436.5" y="105.3" width="8.5" height="515.5" fill="#4e4e4e" />
<rect x="1438" y="117.5" width="6" height="251" fill="#6c6c6c" rx="3"/>
<path d="M1438.5 112.5 L1441 110 L1443.5 112.5" fill="none" stroke="#8c8c8c" stroke-width="1" />
<path d="M1438.5 612.5 L1441 615 L1443.5 612.5" fill="none" stroke="#a4a4a4" stroke-width="1" />
<rect x="1261" y="620.8" width="184" height="0.8" fill="#474747" />
<text x="1264.7" y="633.2" font-size="9.2" fill="#ececec" textLength="57.5" lengthAdjust="spacingAndGlyphs" >Page: 1, 2 Layers</text>
<rect x="1399.5" y="626.5" width="7.5" height="7.5" fill="none" stroke="#d4d4d4" stroke-width="1"/>
<path d="M1403.25 628.3 v4 M1401.25 630.3 h4" fill="none" stroke="#d4d4d4" stroke-width="1" />
<path d="M1419.5 627.5 h7 M1421.5 627.5 v-1 h3 v1 M1420.3 628.5 l0.5 6 h4.4 l0.5 -6" fill="none" stroke="#a0a0a0" stroke-width="1" />
<rect x="1261" y="639.3" width="184" height="1.6" fill="#3c3c3c" />
<rect x="1261" y="641" width="184" height="20" fill="#454545" />
<rect x="1261" y="641" width="72.7" height="20" fill="#535353" />
<rect x="1333.6" y="641" width="0.8" height="20" fill="#3e3e3e" />
<rect x="1391.6" y="641" width="0.8" height="20" fill="#3e3e3e" />
<path d="M1266.2 649.5 L1268 647.2 L1269.8 649.5 M1266.2 652.1 L1268 654.4 L1269.8 652.1" fill="none" stroke="#d0d0d0" stroke-width="0.9" />
<text x="1274.6" y="654.6" font-size="9.5" fill="#fafafa" textLength="49.6" lengthAdjust="spacingAndGlyphs" font-weight="bold" >Object Styles</text>
<text x="1342.6" y="654.6" font-size="9.5" fill="#b4b4b4" textLength="39.7" lengthAdjust="spacingAndGlyphs" font-weight="bold" >Text Wrap</text>
<rect x="1433.6" y="648.4" width="7.6" height="1.3" fill="#a4a4a4" />
<rect x="1433.6" y="650.4" width="7.6" height="1.3" fill="#a4a4a4" />
<rect x="1433.6" y="652.4" width="7.6" height="1.3" fill="#a4a4a4" />
<text x="1264.7" y="675" font-size="9.2" fill="#ececec" textLength="78.5" lengthAdjust="spacingAndGlyphs" >[Basic Graphics Frame]</text>
<path d="M1436.2 666 L1432.6 672.5 H1435.4 L1434 678 L1438 670.8 H1435.2 Z" fill="#d0d0d0" />
<rect x="1261" y="680" width="184" height="0.8" fill="#494949" />
<text x="1289.4" y="692.3" font-size="9.2" fill="#ececec" textLength="23.2" lengthAdjust="spacingAndGlyphs" >[None]</text>
<path d="M1431.5 685 L1439.5 693 M1439.5 685 L1431.5 693" fill="none" stroke="#c4c4c4" stroke-width="1.1" />
<path d="M1435.5 684 v3 M1435.5 691 v3" fill="none" stroke="#8a8a8a" stroke-width="0.8" />
<rect x="1261" y="697" width="184" height="16" fill="#4a6b95" />
<text x="1289.4" y="708.8" font-size="9.2" fill="#fff" textLength="87.2" lengthAdjust="spacingAndGlyphs" font-weight="bold" >[Basic Graphics Frame]</text>
<rect x="1427" y="701.2" width="8" height="8" fill="none" stroke="#e8e8e8" stroke-width="1" stroke-dasharray="2.6 1.4" stroke-dashoffset="1.3"/>
<text x="1289.4" y="725.8" font-size="9.2" fill="#ececec" textLength="62.6" lengthAdjust="spacingAndGlyphs" >[Basic Text Frame]</text>
<rect x="1427.2" y="718.2" width="7.6" height="8" fill="none" stroke="#d8d8d8" stroke-width="1"/>
<path d="M1431 719.5 v5.5 M1429.5 720 h3 M1429.5 724.8 h3" fill="none" stroke="#d8d8d8" stroke-width="0.8" />
<rect x="1261" y="729.6" width="184" height="0.8" fill="#494949" />
<rect x="1261" y="761.3" width="184" height="0.8" fill="#494949" />
<path d="M1334 768.5 h3.5 l1 1.2 h5.5 v6.5 h-10 z" fill="#d0d0d0" />
<rect x="1353.5" y="769.5" width="5.5" height="5" fill="#7a7a7a" stroke="#c8c8c8" stroke-width="0.9"/>
<rect x="1356" y="772" width="5" height="4.5" fill="#2a2a2a" stroke="#c8c8c8" stroke-width="0.9"/>
<path d="M1362.5 772.5 h3 v4 h-2.5" fill="none" stroke="#868686" stroke-width="0.9" />
<rect x="1375.5" y="769.5" width="6" height="6" fill="none" stroke="#868686" stroke-width="0.9" stroke-dasharray="2 1"/>
<line x1="1384" y1="774.5" x2="1387.5" y2="771" stroke="#868686" stroke-width="1.1" />
<rect x="1399.5" y="768.5" width="7.5" height="7.5" fill="none" stroke="#d4d4d4" stroke-width="1"/>
<path d="M1403.25 770.3 v4 M1401.25 772.3 h4" fill="none" stroke="#d4d4d4" stroke-width="1" />
<path d="M1419.5 769.5 h7 M1421.5 769.5 v-1 h3 v1 M1420.3 770.5 l0.5 6 h4.4 l0.5 -6" fill="none" stroke="#7c7c7c" stroke-width="1" />
<rect x="1261" y="781.3" width="184" height="1" fill="#3c3c3c" />
<rect x="1261" y="782.3" width="184" height="3.7" fill="#484848" />
<!-- sec_status -->
<rect x="0" y="760.5" width="1218" height="25.5" fill="#565656" />
<rect x="0" y="775" width="1218" height="11" fill="#535353" />
<text x="9" y="785" font-size="9.5" fill="#e8e8e8" textLength="15" lengthAdjust="spacingAndGlyphs" >25%</text>
<path d="M41.5 779.5 L44.5 782.5 L47.5 779.5" fill="none" stroke="#c8c8c8" stroke-width="1.1" />
<path d="M57.5 779 V786 M62.5 779 L59 782.5 L62.5 786 Z" fill="#7c7c7c" stroke="#7c7c7c" stroke-width="0.8" />
<path d="M77.5 779.5 L74.5 782.5 L77.5 785.5 Z" fill="#7c7c7c" />
<rect x="86.5" y="776.5" width="68" height="12" fill="#474747" stroke="#6a6a6a" rx="1"/>
<text x="90" y="785" font-size="9.5" fill="#f0f0f0" >1</text>
<rect x="141.5" y="777" width="1" height="9" fill="#6a6a6a" />
<path d="M145 779.5 L148 782.5 L151 779.5" fill="none" stroke="#c8c8c8" stroke-width="1.1" />
<path d="M164.5 779.5 L167.5 782.5 L164.5 785.5 Z" fill="#7c7c7c" />
<path d="M184.5 779 V786 M179.5 779 L183 782.5 L179.5 786 Z" fill="#7c7c7c" stroke="#7c7c7c" stroke-width="0.8" />
<path d="M200.6 779.4 a4.2 4.2 0 1 0 5.2 0" fill="none" stroke="#c4c4c4" stroke-width="1.5" />
<rect x="202.5" y="777.2" width="1.4" height="3.6" fill="#c4c4c4" />
<rect x="209" y="784.5" width="1.2" height="1.2" fill="#c8c8c8" />
<text x="222" y="785" font-size="9.5" fill="#e8e8e8" textLength="59" lengthAdjust="spacingAndGlyphs" >[Basic] (working)</text>
<path d="M298.5 779.5 L301.5 782.5 L304.5 779.5" fill="none" stroke="#c8c8c8" stroke-width="1.1" />
<circle cx="321" cy="782" r="3.6" fill="#1fa31f"/>
<text x="329.5" y="785" font-size="9.5" fill="#e8e8e8" textLength="32" lengthAdjust="spacingAndGlyphs" >No errors</text>
<path d="M377.5 779.5 L380.5 782.5 L383.5 779.5" fill="none" stroke="#9a9a9a" stroke-width="1.1" />
<path d="M395 779 L392 782.5 L395 786" fill="none" stroke="#7c7c7c" stroke-width="1.1" />
<rect x="400" y="775.5" width="790" height="10.5" fill="#4b4b4b" />
<rect x="767" y="776.5" width="275" height="9.5" fill="#696969" rx="4.5"/>
<path d="M1192.5 779 L1195.5 782.5 L1192.5 786" fill="none" stroke="#8a8a8a" stroke-width="1.1" />
<rect x="1204.5" y="778.5" width="10" height="8" fill="none" stroke="#e0e0e0" stroke-width="1.2"/>
<rect x="1209" y="778" width="1.2" height="8" fill="#e0e0e0" />
</svg>
</body>
</html>
